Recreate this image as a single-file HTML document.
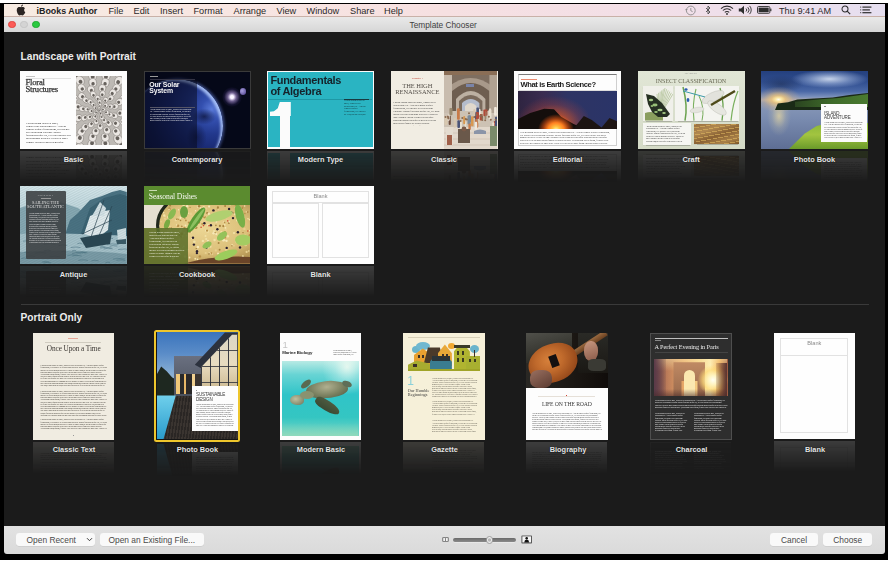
<!DOCTYPE html>
<html><head><meta charset="utf-8">
<style>
*{box-sizing:border-box;margin:0;padding:0}
html,body{width:888px;height:562px;overflow:hidden;background:#fff;font-family:"Liberation Sans",sans-serif}
.a{position:absolute}
#frame{position:absolute;left:0;top:3px;width:888px;height:556.7px;background:#000}
#menubar{position:absolute;left:3.5px;top:3.9px;width:881.2px;height:13.6px;background:linear-gradient(90deg,#f7ebe2 0%,#f7e6e2 25%,#f6e0e1 50%,#f2dfe8 75%,#e6dff0 100%);border-bottom:0.7px solid #c9b1a8}
#titlebar{position:absolute;left:3.5px;top:16.5px;width:881.2px;height:15.1px;background:linear-gradient(#e9e9e9,#d6d6d6)}
#content{position:absolute;left:3.5px;top:30px;width:881.2px;height:497px;background:#1b1b1b}
#bottombar{position:absolute;left:3.6px;top:525.9px;width:881px;height:27.8px;background:linear-gradient(#e2e2e2,#dadada);border-radius:0 0 3px 3px}
.mi{position:absolute;top:5.6px;font-size:9.2px;color:#2a2a2a;white-space:nowrap;line-height:11px}
.tl{position:absolute;top:20.5px;width:7.8px;height:7.8px;border-radius:50%}
.sec{position:absolute;color:#ececec;font-weight:bold;font-size:10.2px;white-space:nowrap;line-height:12px}
.th{position:absolute;width:107px;height:78px;overflow:hidden;-webkit-box-reflect:below 2px linear-gradient(transparent 60%,rgba(0,0,0,.15))}
.pt{position:absolute;width:82px;height:107px;overflow:hidden;-webkit-box-reflect:below 2px linear-gradient(transparent 70%,rgba(0,0,0,.15))}
.lb{position:absolute;width:123px;text-align:center;color:#e6e6e6;font-weight:bold;font-size:7.4px;line-height:9px;white-space:nowrap;text-shadow:0 0 1px #000}
.lo{position:absolute;overflow:hidden;font-family:'Liberation Serif',serif;text-align:left;word-spacing:-0.05em}
.btn{position:absolute;top:533.1px;height:12.8px;background:#f9f9f9;border-radius:3px;box-shadow:0 0.5px 0.5px rgba(0,0,0,.12);font-size:8.4px;color:#4a4a4a;line-height:14.2px;text-align:center;white-space:nowrap}
</style></head><body>
<div id="frame"></div>
<div id="content"></div>
<div id="bottombar"></div>
<div id="titlebar"></div>
<div id="menubar"></div>

<!-- menu bar -->
<div class="mi" style="left:36.5px;font-weight:bold;font-size:8.9px;color:#222">iBooks Author</div>
<div class="mi" style="left:108.5px">File</div>
<div class="mi" style="left:133.5px">Edit</div>
<div class="mi" style="left:160px">Insert</div>
<div class="mi" style="left:193.5px">Format</div>
<div class="mi" style="left:233.5px">Arrange</div>
<div class="mi" style="left:276.5px">View</div>
<div class="mi" style="left:306.5px">Window</div>
<div class="mi" style="left:350px">Share</div>
<div class="mi" style="left:384px">Help</div>
<div class="mi" style="left:779px">Thu 9:41 AM</div>
<svg class="a" style="left:15.5px;top:4.3px" width="10" height="12" viewBox="0 0 10 12"><path d="M5 3.3C3.9 2.7 1.8 2.6 1 4.6 0.2 6.8 1.3 9.9 2.6 11 3.4 11.7 4.2 11.3 5 11.1 5.8 11.3 6.6 11.7 7.4 11 8.3 10.3 8.9 9.1 9.3 8.3 8 7.6 7.6 5.3 8.9 4.3 8.2 2.9 6.4 2.7 5 3.3Z M5 2.7C5 1.5 5.8 0.5 7 0.4 7 1.6 6.2 2.6 5 2.7Z" fill="#2b2523"/></svg>
<svg class="a" style="left:684px;top:4.5px" width="13" height="11" viewBox="0 0 13 11"><circle cx="6.8" cy="5.5" r="4.4" fill="none" stroke="#8a8a8a" stroke-width="0.9"/><path d="M6.8 3v2.7l1.8 1" fill="none" stroke="#8a8a8a" stroke-width="0.9"/><path d="M1 4.2l1.4 1.6 1.4-1.6z" fill="#8a8a8a"/></svg>
<svg class="a" style="left:704.5px;top:4.5px" width="7" height="11" viewBox="0 0 7 11"><path d="M1 3l4 4-2 2V1l2 2-4 4" fill="none" stroke="#4a4a4a" stroke-width="0.9"/></svg>
<svg class="a" style="left:720px;top:4.6px" width="14" height="10" viewBox="0 0 14 10"><path d="M1 3.6a8.5 8.5 0 0 1 12 0M2.9 5.5a5.8 5.8 0 0 1 8.2 0M4.8 7.4a3.1 3.1 0 0 1 4.4 0" fill="none" stroke="#2e2e2e" stroke-width="1.05"/><circle cx="7" cy="9" r="0.9" fill="#2e2e2e"/></svg>
<svg class="a" style="left:738px;top:4.8px" width="15" height="10" viewBox="0 0 15 10"><path d="M0.8 3.4h2.2l3-2.6v8.4l-3-2.6H0.8z" fill="#2e2e2e"/><path d="M8 3.5a2 2 0 0 1 0 3M9.8 2.2a4 4 0 0 1 0 5.6M11.6 0.9a6 6 0 0 1 0 8.2" fill="none" stroke="#2e2e2e" stroke-width="0.9"/></svg>
<svg class="a" style="left:757px;top:6px" width="15" height="8" viewBox="0 0 15 8"><rect x="0.5" y="0.5" width="12.3" height="6.8" rx="1" fill="none" stroke="#2e2e2e" stroke-width="0.9"/><rect x="1.6" y="1.6" width="10.1" height="4.6" fill="#2e2e2e"/><rect x="13.2" y="2.6" width="1.2" height="2.6" fill="#2e2e2e"/></svg>
<svg class="a" style="left:840.5px;top:5px" width="10" height="10" viewBox="0 0 10 10"><circle cx="4" cy="4" r="3" fill="none" stroke="#2e2e2e" stroke-width="1.05"/><path d="M6.2 6.2L9.2 9.2" stroke="#2e2e2e" stroke-width="1.2"/></svg>
<svg class="a" style="left:859.5px;top:6px" width="12" height="8" viewBox="0 0 12 8"><rect x="0.2" y="0.6" width="1" height="1" fill="#2e2e2e"/><rect x="0.2" y="3.4" width="1" height="1" fill="#2e2e2e"/><rect x="0.2" y="6.2" width="1" height="1" fill="#2e2e2e"/><rect x="2.4" y="0.5" width="9" height="1.2" fill="#2e2e2e"/><rect x="2.4" y="3.3" width="7.5" height="1.2" fill="#2e2e2e"/><rect x="2.4" y="6.1" width="9" height="1.2" fill="#2e2e2e"/></svg>


<!-- title bar -->
<div class="tl" style="left:8.2px;background:#fc5b57;border:0.5px solid #e0443e"></div>
<div class="tl" style="left:20.3px;background:#d4d4d4;border:0.5px solid #c5c5c5"></div>
<div class="tl" style="left:32.4px;background:#2ac940;border:0.5px solid #1fa82f"></div>
<div class="a" style="left:409.5px;top:19.5px;font-size:8.3px;color:#404040;line-height:10px;white-space:nowrap">Template Chooser</div>

<!-- sections -->
<div class="sec" style="left:20.5px;top:51px">Landscape with Portrait</div>
<div class="a" style="left:20.5px;top:303.8px;width:848px;height:1px;background:#3a3a3a"></div>
<div class="sec" style="left:20.5px;top:311.5px">Portrait Only</div>

<!-- row 1 -->
<div class="th" style="left:20px;top:71px;background:#fdfdfd">
 <div class="a" style="left:6px;top:4.6px;width:9px;height:0.8px;background:#c4c4c4"></div>
 <div class="a" style="left:6px;top:7.2px;width:45px;height:0.5px;background:#e2e2e2"></div>
 <div class="a" style="left:5.6px;top:8.2px;font:8.6px/7.2px 'Liberation Serif',serif;color:#333;letter-spacing:-0.25px;-webkit-text-stroke:0.25px #333">Floral<br>Structures</div>
 <div class="a lo" style="left:6px;top:50.71px;width:45px;height:22.5px;font-size:2.9px;line-height:3.15px;color:#1a1a1a">Lorem ipsum dolor sit amet, consectetur adipiscing elit. Aenean tempor aliquet fermentum, elit integer ad vestibulum volutpat. Morbi faucibus neque est, vel odio integer sed nulla magna ultricies. Dolor sit amet congue lorem etiam pellentesque habitant morbi tristique senectus et netus malesuada fames ac turpis egestas. Vestibulum tortor quam, feugiat vitae ultricies eget tempor sit amet ante. Donec eu libero sit amet quam egestas semper aenean ultricies mi vitae est. Mauris placerat eleifend leo quisque sit amet est et sapien ullamcorper pharetra vestibulum erat wisi condimentum sed commodo vitae ornare sit amet wisi aenean fermentum elit eget tincidunt condimentum eros ipsum rutrum orci sagittis tempus lacus enim ac dui donec non enim in turpis pulvinar facilisis ut felis praesent dapibus neque id cursus faucibus tortor neque egestas augue eu vulputate magna eros eu erat aliquam erat volutpat nam dui mi tincidunt quis accumsan porttitor facilisis luctus metus.</div>
  <svg class="a" style="left:56px;top:4.6px" width="46" height="69.5" viewBox="0 0 46 69.5"><rect width="46" height="69.5" fill="#bdb9b4"/><g transform="translate(75.0,34.0) rotate(90)"><ellipse rx="4.9" ry="6.2" fill="#ebe7e3" stroke="#7e7974" stroke-width="0.5"/><ellipse cy="1.6" rx="2.2" ry="2.5" fill="#66615c"/></g><g transform="translate(72.5,50.1) rotate(108)"><ellipse rx="4.9" ry="6.2" fill="#ebe7e3" stroke="#7e7974" stroke-width="0.5"/><ellipse cy="1.6" rx="2.2" ry="2.5" fill="#66615c"/></g><g transform="translate(65.1,64.6) rotate(126)"><ellipse rx="4.9" ry="6.2" fill="#ebe7e3" stroke="#7e7974" stroke-width="0.5"/><ellipse cy="1.6" rx="2.2" ry="2.5" fill="#66615c"/></g><g transform="translate(53.6,76.1) rotate(144)"><ellipse rx="4.9" ry="6.2" fill="#ebe7e3" stroke="#7e7974" stroke-width="0.5"/><ellipse cy="1.6" rx="2.2" ry="2.5" fill="#66615c"/></g><g transform="translate(39.1,83.5) rotate(162)"><ellipse rx="4.9" ry="6.2" fill="#ebe7e3" stroke="#7e7974" stroke-width="0.5"/><ellipse cy="1.6" rx="2.2" ry="2.5" fill="#66615c"/></g><g transform="translate(23.0,86.0) rotate(180)"><ellipse rx="4.9" ry="6.2" fill="#ebe7e3" stroke="#7e7974" stroke-width="0.5"/><ellipse cy="1.6" rx="2.2" ry="2.5" fill="#66615c"/></g><g transform="translate(6.9,83.5) rotate(198)"><ellipse rx="4.9" ry="6.2" fill="#ebe7e3" stroke="#7e7974" stroke-width="0.5"/><ellipse cy="1.6" rx="2.2" ry="2.5" fill="#66615c"/></g><g transform="translate(-7.6,76.1) rotate(216)"><ellipse rx="4.9" ry="6.2" fill="#ebe7e3" stroke="#7e7974" stroke-width="0.5"/><ellipse cy="1.6" rx="2.2" ry="2.5" fill="#66615c"/></g><g transform="translate(-19.1,64.6) rotate(234)"><ellipse rx="4.9" ry="6.2" fill="#ebe7e3" stroke="#7e7974" stroke-width="0.5"/><ellipse cy="1.6" rx="2.2" ry="2.5" fill="#66615c"/></g><g transform="translate(-26.5,50.1) rotate(252)"><ellipse rx="4.9" ry="6.2" fill="#ebe7e3" stroke="#7e7974" stroke-width="0.5"/><ellipse cy="1.6" rx="2.2" ry="2.5" fill="#66615c"/></g><g transform="translate(-29.0,34.0) rotate(270)"><ellipse rx="4.9" ry="6.2" fill="#ebe7e3" stroke="#7e7974" stroke-width="0.5"/><ellipse cy="1.6" rx="2.2" ry="2.5" fill="#66615c"/></g><g transform="translate(-26.5,17.9) rotate(288)"><ellipse rx="4.9" ry="6.2" fill="#ebe7e3" stroke="#7e7974" stroke-width="0.5"/><ellipse cy="1.6" rx="2.2" ry="2.5" fill="#66615c"/></g><g transform="translate(-19.1,3.4) rotate(306)"><ellipse rx="4.9" ry="6.2" fill="#ebe7e3" stroke="#7e7974" stroke-width="0.5"/><ellipse cy="1.6" rx="2.2" ry="2.5" fill="#66615c"/></g><g transform="translate(-7.6,-8.1) rotate(324)"><ellipse rx="4.9" ry="6.2" fill="#ebe7e3" stroke="#7e7974" stroke-width="0.5"/><ellipse cy="1.6" rx="2.2" ry="2.5" fill="#66615c"/></g><g transform="translate(6.9,-15.5) rotate(342)"><ellipse rx="4.9" ry="6.2" fill="#ebe7e3" stroke="#7e7974" stroke-width="0.5"/><ellipse cy="1.6" rx="2.2" ry="2.5" fill="#66615c"/></g><g transform="translate(23.0,-18.0) rotate(360)"><ellipse rx="4.9" ry="6.2" fill="#ebe7e3" stroke="#7e7974" stroke-width="0.5"/><ellipse cy="1.6" rx="2.2" ry="2.5" fill="#66615c"/></g><g transform="translate(39.1,-15.5) rotate(378)"><ellipse rx="4.9" ry="6.2" fill="#ebe7e3" stroke="#7e7974" stroke-width="0.5"/><ellipse cy="1.6" rx="2.2" ry="2.5" fill="#66615c"/></g><g transform="translate(53.6,-8.1) rotate(396)"><ellipse rx="4.9" ry="6.2" fill="#ebe7e3" stroke="#7e7974" stroke-width="0.5"/><ellipse cy="1.6" rx="2.2" ry="2.5" fill="#66615c"/></g><g transform="translate(65.1,3.4) rotate(414)"><ellipse rx="4.9" ry="6.2" fill="#ebe7e3" stroke="#7e7974" stroke-width="0.5"/><ellipse cy="1.6" rx="2.2" ry="2.5" fill="#66615c"/></g><g transform="translate(72.5,17.9) rotate(432)"><ellipse rx="4.9" ry="6.2" fill="#ebe7e3" stroke="#7e7974" stroke-width="0.5"/><ellipse cy="1.6" rx="2.2" ry="2.5" fill="#66615c"/></g><g transform="translate(64.1,46.7) rotate(107)"><ellipse rx="4.5" ry="5.6" fill="#ebe7e3" stroke="#7e7974" stroke-width="0.5"/><ellipse cy="1.4" rx="2.0" ry="2.2" fill="#66615c"/></g><g transform="translate(57.3,60.0) rotate(127)"><ellipse rx="4.5" ry="5.6" fill="#ebe7e3" stroke="#7e7974" stroke-width="0.5"/><ellipse cy="1.4" rx="2.0" ry="2.2" fill="#66615c"/></g><g transform="translate(46.3,70.1) rotate(147)"><ellipse rx="4.5" ry="5.6" fill="#ebe7e3" stroke="#7e7974" stroke-width="0.5"/><ellipse cy="1.4" rx="2.0" ry="2.2" fill="#66615c"/></g><g transform="translate(32.5,75.9) rotate(167)"><ellipse rx="4.5" ry="5.6" fill="#ebe7e3" stroke="#7e7974" stroke-width="0.5"/><ellipse cy="1.4" rx="2.0" ry="2.2" fill="#66615c"/></g><g transform="translate(17.6,76.7) rotate(187)"><ellipse rx="4.5" ry="5.6" fill="#ebe7e3" stroke="#7e7974" stroke-width="0.5"/><ellipse cy="1.4" rx="2.0" ry="2.2" fill="#66615c"/></g><g transform="translate(3.4,72.2) rotate(207)"><ellipse rx="4.5" ry="5.6" fill="#ebe7e3" stroke="#7e7974" stroke-width="0.5"/><ellipse cy="1.4" rx="2.0" ry="2.2" fill="#66615c"/></g><g transform="translate(-8.5,63.2) rotate(227)"><ellipse rx="4.5" ry="5.6" fill="#ebe7e3" stroke="#7e7974" stroke-width="0.5"/><ellipse cy="1.4" rx="2.0" ry="2.2" fill="#66615c"/></g><g transform="translate(-16.6,50.7) rotate(247)"><ellipse rx="4.5" ry="5.6" fill="#ebe7e3" stroke="#7e7974" stroke-width="0.5"/><ellipse cy="1.4" rx="2.0" ry="2.2" fill="#66615c"/></g><g transform="translate(-19.9,36.1) rotate(267)"><ellipse rx="4.5" ry="5.6" fill="#ebe7e3" stroke="#7e7974" stroke-width="0.5"/><ellipse cy="1.4" rx="2.0" ry="2.2" fill="#66615c"/></g><g transform="translate(-18.1,21.3) rotate(287)"><ellipse rx="4.5" ry="5.6" fill="#ebe7e3" stroke="#7e7974" stroke-width="0.5"/><ellipse cy="1.4" rx="2.0" ry="2.2" fill="#66615c"/></g><g transform="translate(-11.3,8.0) rotate(307)"><ellipse rx="4.5" ry="5.6" fill="#ebe7e3" stroke="#7e7974" stroke-width="0.5"/><ellipse cy="1.4" rx="2.0" ry="2.2" fill="#66615c"/></g><g transform="translate(-0.3,-2.1) rotate(327)"><ellipse rx="4.5" ry="5.6" fill="#ebe7e3" stroke="#7e7974" stroke-width="0.5"/><ellipse cy="1.4" rx="2.0" ry="2.2" fill="#66615c"/></g><g transform="translate(13.5,-7.9) rotate(347)"><ellipse rx="4.5" ry="5.6" fill="#ebe7e3" stroke="#7e7974" stroke-width="0.5"/><ellipse cy="1.4" rx="2.0" ry="2.2" fill="#66615c"/></g><g transform="translate(28.4,-8.7) rotate(367)"><ellipse rx="4.5" ry="5.6" fill="#ebe7e3" stroke="#7e7974" stroke-width="0.5"/><ellipse cy="1.4" rx="2.0" ry="2.2" fill="#66615c"/></g><g transform="translate(42.6,-4.2) rotate(387)"><ellipse rx="4.5" ry="5.6" fill="#ebe7e3" stroke="#7e7974" stroke-width="0.5"/><ellipse cy="1.4" rx="2.0" ry="2.2" fill="#66615c"/></g><g transform="translate(54.5,4.8) rotate(407)"><ellipse rx="4.5" ry="5.6" fill="#ebe7e3" stroke="#7e7974" stroke-width="0.5"/><ellipse cy="1.4" rx="2.0" ry="2.2" fill="#66615c"/></g><g transform="translate(62.6,17.3) rotate(427)"><ellipse rx="4.5" ry="5.6" fill="#ebe7e3" stroke="#7e7974" stroke-width="0.5"/><ellipse cy="1.4" rx="2.0" ry="2.2" fill="#66615c"/></g><g transform="translate(65.9,31.9) rotate(447)"><ellipse rx="4.5" ry="5.6" fill="#ebe7e3" stroke="#7e7974" stroke-width="0.5"/><ellipse cy="1.4" rx="2.0" ry="2.2" fill="#66615c"/></g><g transform="translate(51.9,53.8) rotate(124)"><ellipse rx="4.1" ry="5.0" fill="#ebe7e3" stroke="#7e7974" stroke-width="0.5"/><ellipse cy="1.2" rx="1.9" ry="2.0" fill="#66615c"/></g><g transform="translate(42.1,63.3) rotate(147)"><ellipse rx="4.1" ry="5.0" fill="#ebe7e3" stroke="#7e7974" stroke-width="0.5"/><ellipse cy="1.2" rx="1.9" ry="2.0" fill="#66615c"/></g><g transform="translate(29.5,68.4) rotate(169)"><ellipse rx="4.1" ry="5.0" fill="#ebe7e3" stroke="#7e7974" stroke-width="0.5"/><ellipse cy="1.2" rx="1.9" ry="2.0" fill="#66615c"/></g><g transform="translate(15.8,68.3) rotate(192)"><ellipse rx="4.1" ry="5.0" fill="#ebe7e3" stroke="#7e7974" stroke-width="0.5"/><ellipse cy="1.2" rx="1.9" ry="2.0" fill="#66615c"/></g><g transform="translate(3.2,62.9) rotate(214)"><ellipse rx="4.1" ry="5.0" fill="#ebe7e3" stroke="#7e7974" stroke-width="0.5"/><ellipse cy="1.2" rx="1.9" ry="2.0" fill="#66615c"/></g><g transform="translate(-6.3,53.1) rotate(237)"><ellipse rx="4.1" ry="5.0" fill="#ebe7e3" stroke="#7e7974" stroke-width="0.5"/><ellipse cy="1.2" rx="1.9" ry="2.0" fill="#66615c"/></g><g transform="translate(-11.4,40.5) rotate(259)"><ellipse rx="4.1" ry="5.0" fill="#ebe7e3" stroke="#7e7974" stroke-width="0.5"/><ellipse cy="1.2" rx="1.9" ry="2.0" fill="#66615c"/></g><g transform="translate(-11.3,26.8) rotate(282)"><ellipse rx="4.1" ry="5.0" fill="#ebe7e3" stroke="#7e7974" stroke-width="0.5"/><ellipse cy="1.2" rx="1.9" ry="2.0" fill="#66615c"/></g><g transform="translate(-5.9,14.2) rotate(304)"><ellipse rx="4.1" ry="5.0" fill="#ebe7e3" stroke="#7e7974" stroke-width="0.5"/><ellipse cy="1.2" rx="1.9" ry="2.0" fill="#66615c"/></g><g transform="translate(3.9,4.7) rotate(327)"><ellipse rx="4.1" ry="5.0" fill="#ebe7e3" stroke="#7e7974" stroke-width="0.5"/><ellipse cy="1.2" rx="1.9" ry="2.0" fill="#66615c"/></g><g transform="translate(16.5,-0.4) rotate(349)"><ellipse rx="4.1" ry="5.0" fill="#ebe7e3" stroke="#7e7974" stroke-width="0.5"/><ellipse cy="1.2" rx="1.9" ry="2.0" fill="#66615c"/></g><g transform="translate(30.2,-0.3) rotate(372)"><ellipse rx="4.1" ry="5.0" fill="#ebe7e3" stroke="#7e7974" stroke-width="0.5"/><ellipse cy="1.2" rx="1.9" ry="2.0" fill="#66615c"/></g><g transform="translate(42.8,5.1) rotate(394)"><ellipse rx="4.1" ry="5.0" fill="#ebe7e3" stroke="#7e7974" stroke-width="0.5"/><ellipse cy="1.2" rx="1.9" ry="2.0" fill="#66615c"/></g><g transform="translate(52.3,14.9) rotate(417)"><ellipse rx="4.1" ry="5.0" fill="#ebe7e3" stroke="#7e7974" stroke-width="0.5"/><ellipse cy="1.2" rx="1.9" ry="2.0" fill="#66615c"/></g><g transform="translate(57.4,27.5) rotate(439)"><ellipse rx="4.1" ry="5.0" fill="#ebe7e3" stroke="#7e7974" stroke-width="0.5"/><ellipse cy="1.2" rx="1.9" ry="2.0" fill="#66615c"/></g><g transform="translate(57.3,41.2) rotate(462)"><ellipse rx="4.1" ry="5.0" fill="#ebe7e3" stroke="#7e7974" stroke-width="0.5"/><ellipse cy="1.2" rx="1.9" ry="2.0" fill="#66615c"/></g><g transform="translate(40.4,55.9) rotate(142)"><ellipse rx="3.8" ry="4.3" fill="#ebe7e3" stroke="#7e7974" stroke-width="0.5"/><ellipse cy="1.1" rx="1.7" ry="1.7" fill="#66615c"/></g><g transform="translate(29.2,61.3) rotate(167)"><ellipse rx="3.8" ry="4.3" fill="#ebe7e3" stroke="#7e7974" stroke-width="0.5"/><ellipse cy="1.1" rx="1.7" ry="1.7" fill="#66615c"/></g><g transform="translate(16.7,61.3) rotate(193)"><ellipse rx="3.8" ry="4.3" fill="#ebe7e3" stroke="#7e7974" stroke-width="0.5"/><ellipse cy="1.1" rx="1.7" ry="1.7" fill="#66615c"/></g><g transform="translate(5.5,55.8) rotate(219)"><ellipse rx="3.8" ry="4.3" fill="#ebe7e3" stroke="#7e7974" stroke-width="0.5"/><ellipse cy="1.1" rx="1.7" ry="1.7" fill="#66615c"/></g><g transform="translate(-2.3,46.1) rotate(244)"><ellipse rx="3.8" ry="4.3" fill="#ebe7e3" stroke="#7e7974" stroke-width="0.5"/><ellipse cy="1.1" rx="1.7" ry="1.7" fill="#66615c"/></g><g transform="translate(-5.0,33.9) rotate(270)"><ellipse rx="3.8" ry="4.3" fill="#ebe7e3" stroke="#7e7974" stroke-width="0.5"/><ellipse cy="1.1" rx="1.7" ry="1.7" fill="#66615c"/></g><g transform="translate(-2.2,21.8) rotate(296)"><ellipse rx="3.8" ry="4.3" fill="#ebe7e3" stroke="#7e7974" stroke-width="0.5"/><ellipse cy="1.1" rx="1.7" ry="1.7" fill="#66615c"/></g><g transform="translate(5.6,12.1) rotate(322)"><ellipse rx="3.8" ry="4.3" fill="#ebe7e3" stroke="#7e7974" stroke-width="0.5"/><ellipse cy="1.1" rx="1.7" ry="1.7" fill="#66615c"/></g><g transform="translate(16.8,6.7) rotate(347)"><ellipse rx="3.8" ry="4.3" fill="#ebe7e3" stroke="#7e7974" stroke-width="0.5"/><ellipse cy="1.1" rx="1.7" ry="1.7" fill="#66615c"/></g><g transform="translate(29.3,6.7) rotate(373)"><ellipse rx="3.8" ry="4.3" fill="#ebe7e3" stroke="#7e7974" stroke-width="0.5"/><ellipse cy="1.1" rx="1.7" ry="1.7" fill="#66615c"/></g><g transform="translate(40.5,12.2) rotate(399)"><ellipse rx="3.8" ry="4.3" fill="#ebe7e3" stroke="#7e7974" stroke-width="0.5"/><ellipse cy="1.1" rx="1.7" ry="1.7" fill="#66615c"/></g><g transform="translate(48.3,21.9) rotate(424)"><ellipse rx="3.8" ry="4.3" fill="#ebe7e3" stroke="#7e7974" stroke-width="0.5"/><ellipse cy="1.1" rx="1.7" ry="1.7" fill="#66615c"/></g><g transform="translate(51.0,34.1) rotate(450)"><ellipse rx="3.8" ry="4.3" fill="#ebe7e3" stroke="#7e7974" stroke-width="0.5"/><ellipse cy="1.1" rx="1.7" ry="1.7" fill="#66615c"/></g><g transform="translate(48.2,46.2) rotate(476)"><ellipse rx="3.8" ry="4.3" fill="#ebe7e3" stroke="#7e7974" stroke-width="0.5"/><ellipse cy="1.1" rx="1.7" ry="1.7" fill="#66615c"/></g><g transform="translate(31.0,54.5) rotate(159)"><ellipse rx="3.5" ry="3.7" fill="#ebe7e3" stroke="#7e7974" stroke-width="0.5"/><ellipse cy="0.9" rx="1.6" ry="1.5" fill="#66615c"/></g><g transform="translate(19.7,55.7) rotate(189)"><ellipse rx="3.5" ry="3.7" fill="#ebe7e3" stroke="#7e7974" stroke-width="0.5"/><ellipse cy="0.9" rx="1.6" ry="1.5" fill="#66615c"/></g><g transform="translate(9.2,51.2) rotate(219)"><ellipse rx="3.5" ry="3.7" fill="#ebe7e3" stroke="#7e7974" stroke-width="0.5"/><ellipse cy="0.9" rx="1.6" ry="1.5" fill="#66615c"/></g><g transform="translate(2.5,42.0) rotate(249)"><ellipse rx="3.5" ry="3.7" fill="#ebe7e3" stroke="#7e7974" stroke-width="0.5"/><ellipse cy="0.9" rx="1.6" ry="1.5" fill="#66615c"/></g><g transform="translate(1.3,30.7) rotate(279)"><ellipse rx="3.5" ry="3.7" fill="#ebe7e3" stroke="#7e7974" stroke-width="0.5"/><ellipse cy="0.9" rx="1.6" ry="1.5" fill="#66615c"/></g><g transform="translate(5.8,20.2) rotate(309)"><ellipse rx="3.5" ry="3.7" fill="#ebe7e3" stroke="#7e7974" stroke-width="0.5"/><ellipse cy="0.9" rx="1.6" ry="1.5" fill="#66615c"/></g><g transform="translate(15.0,13.5) rotate(339)"><ellipse rx="3.5" ry="3.7" fill="#ebe7e3" stroke="#7e7974" stroke-width="0.5"/><ellipse cy="0.9" rx="1.6" ry="1.5" fill="#66615c"/></g><g transform="translate(26.3,12.3) rotate(369)"><ellipse rx="3.5" ry="3.7" fill="#ebe7e3" stroke="#7e7974" stroke-width="0.5"/><ellipse cy="0.9" rx="1.6" ry="1.5" fill="#66615c"/></g><g transform="translate(36.8,16.8) rotate(399)"><ellipse rx="3.5" ry="3.7" fill="#ebe7e3" stroke="#7e7974" stroke-width="0.5"/><ellipse cy="0.9" rx="1.6" ry="1.5" fill="#66615c"/></g><g transform="translate(43.5,26.0) rotate(429)"><ellipse rx="3.5" ry="3.7" fill="#ebe7e3" stroke="#7e7974" stroke-width="0.5"/><ellipse cy="0.9" rx="1.6" ry="1.5" fill="#66615c"/></g><g transform="translate(44.7,37.3) rotate(459)"><ellipse rx="3.5" ry="3.7" fill="#ebe7e3" stroke="#7e7974" stroke-width="0.5"/><ellipse cy="0.9" rx="1.6" ry="1.5" fill="#66615c"/></g><g transform="translate(40.2,47.8) rotate(489)"><ellipse rx="3.5" ry="3.7" fill="#ebe7e3" stroke="#7e7974" stroke-width="0.5"/><ellipse cy="0.9" rx="1.6" ry="1.5" fill="#66615c"/></g><g transform="translate(24.2,50.5) rotate(176)"><ellipse rx="2.8" ry="3.4" fill="#ebe7e3" stroke="#7e7974" stroke-width="0.5"/><ellipse cy="0.9" rx="1.3" ry="1.4" fill="#66615c"/></g><g transform="translate(15.1,48.5) rotate(209)"><ellipse rx="2.8" ry="3.4" fill="#ebe7e3" stroke="#7e7974" stroke-width="0.5"/><ellipse cy="0.9" rx="1.3" ry="1.4" fill="#66615c"/></g><g transform="translate(8.5,41.9) rotate(241)"><ellipse rx="2.8" ry="3.4" fill="#ebe7e3" stroke="#7e7974" stroke-width="0.5"/><ellipse cy="0.9" rx="1.3" ry="1.4" fill="#66615c"/></g><g transform="translate(6.5,32.8) rotate(274)"><ellipse rx="2.8" ry="3.4" fill="#ebe7e3" stroke="#7e7974" stroke-width="0.5"/><ellipse cy="0.9" rx="1.3" ry="1.4" fill="#66615c"/></g><g transform="translate(9.8,24.1) rotate(307)"><ellipse rx="2.8" ry="3.4" fill="#ebe7e3" stroke="#7e7974" stroke-width="0.5"/><ellipse cy="0.9" rx="1.3" ry="1.4" fill="#66615c"/></g><g transform="translate(17.2,18.5) rotate(340)"><ellipse rx="2.8" ry="3.4" fill="#ebe7e3" stroke="#7e7974" stroke-width="0.5"/><ellipse cy="0.9" rx="1.3" ry="1.4" fill="#66615c"/></g><g transform="translate(26.5,17.9) rotate(372)"><ellipse rx="2.8" ry="3.4" fill="#ebe7e3" stroke="#7e7974" stroke-width="0.5"/><ellipse cy="0.9" rx="1.3" ry="1.4" fill="#66615c"/></g><g transform="translate(34.7,22.3) rotate(405)"><ellipse rx="2.8" ry="3.4" fill="#ebe7e3" stroke="#7e7974" stroke-width="0.5"/><ellipse cy="0.9" rx="1.3" ry="1.4" fill="#66615c"/></g><g transform="translate(39.1,30.5) rotate(438)"><ellipse rx="2.8" ry="3.4" fill="#ebe7e3" stroke="#7e7974" stroke-width="0.5"/><ellipse cy="0.9" rx="1.3" ry="1.4" fill="#66615c"/></g><g transform="translate(38.5,39.8) rotate(470)"><ellipse rx="2.8" ry="3.4" fill="#ebe7e3" stroke="#7e7974" stroke-width="0.5"/><ellipse cy="0.9" rx="1.3" ry="1.4" fill="#66615c"/></g><g transform="translate(32.9,47.2) rotate(503)"><ellipse rx="2.8" ry="3.4" fill="#ebe7e3" stroke="#7e7974" stroke-width="0.5"/><ellipse cy="0.9" rx="1.3" ry="1.4" fill="#66615c"/></g><g transform="translate(20.3,45.7) rotate(193)"><ellipse rx="2.5" ry="2.8" fill="#ebe7e3" stroke="#7e7974" stroke-width="0.5"/><ellipse cy="0.7" rx="1.1" ry="1.1" fill="#66615c"/></g><g transform="translate(13.4,41.2) rotate(233)"><ellipse rx="2.5" ry="2.8" fill="#ebe7e3" stroke="#7e7974" stroke-width="0.5"/><ellipse cy="0.7" rx="1.1" ry="1.1" fill="#66615c"/></g><g transform="translate(11.0,33.3) rotate(273)"><ellipse rx="2.5" ry="2.8" fill="#ebe7e3" stroke="#7e7974" stroke-width="0.5"/><ellipse cy="0.7" rx="1.1" ry="1.1" fill="#66615c"/></g><g transform="translate(14.2,25.8) rotate(313)"><ellipse rx="2.5" ry="2.8" fill="#ebe7e3" stroke="#7e7974" stroke-width="0.5"/><ellipse cy="0.7" rx="1.1" ry="1.1" fill="#66615c"/></g><g transform="translate(21.6,22.1) rotate(353)"><ellipse rx="2.5" ry="2.8" fill="#ebe7e3" stroke="#7e7974" stroke-width="0.5"/><ellipse cy="0.7" rx="1.1" ry="1.1" fill="#66615c"/></g><g transform="translate(29.6,24.0) rotate(393)"><ellipse rx="2.5" ry="2.8" fill="#ebe7e3" stroke="#7e7974" stroke-width="0.5"/><ellipse cy="0.7" rx="1.1" ry="1.1" fill="#66615c"/></g><g transform="translate(34.5,30.5) rotate(433)"><ellipse rx="2.5" ry="2.8" fill="#ebe7e3" stroke="#7e7974" stroke-width="0.5"/><ellipse cy="0.7" rx="1.1" ry="1.1" fill="#66615c"/></g><g transform="translate(34.0,38.7) rotate(473)"><ellipse rx="2.5" ry="2.8" fill="#ebe7e3" stroke="#7e7974" stroke-width="0.5"/><ellipse cy="0.7" rx="1.1" ry="1.1" fill="#66615c"/></g><g transform="translate(28.4,44.7) rotate(513)"><ellipse rx="2.5" ry="2.8" fill="#ebe7e3" stroke="#7e7974" stroke-width="0.5"/><ellipse cy="0.7" rx="1.1" ry="1.1" fill="#66615c"/></g><g transform="translate(19.0,40.9) rotate(210)"><ellipse rx="2.2" ry="2.5" fill="#ebe7e3" stroke="#7e7974" stroke-width="0.5"/><ellipse cy="0.6" rx="1.0" ry="1.0" fill="#66615c"/></g><g transform="translate(15.1,35.1) rotate(262)"><ellipse rx="2.2" ry="2.5" fill="#ebe7e3" stroke="#7e7974" stroke-width="0.5"/><ellipse cy="0.6" rx="1.0" ry="1.0" fill="#66615c"/></g><g transform="translate(17.2,28.5) rotate(313)"><ellipse rx="2.2" ry="2.5" fill="#ebe7e3" stroke="#7e7974" stroke-width="0.5"/><ellipse cy="0.6" rx="1.0" ry="1.0" fill="#66615c"/></g><g transform="translate(23.6,26.0) rotate(365)"><ellipse rx="2.2" ry="2.5" fill="#ebe7e3" stroke="#7e7974" stroke-width="0.5"/><ellipse cy="0.6" rx="1.0" ry="1.0" fill="#66615c"/></g><g transform="translate(29.6,29.5) rotate(416)"><ellipse rx="2.2" ry="2.5" fill="#ebe7e3" stroke="#7e7974" stroke-width="0.5"/><ellipse cy="0.6" rx="1.0" ry="1.0" fill="#66615c"/></g><g transform="translate(30.6,36.4) rotate(467)"><ellipse rx="2.2" ry="2.5" fill="#ebe7e3" stroke="#7e7974" stroke-width="0.5"/><ellipse cy="0.6" rx="1.0" ry="1.0" fill="#66615c"/></g><g transform="translate(25.9,41.5) rotate(519)"><ellipse rx="2.2" ry="2.5" fill="#ebe7e3" stroke="#7e7974" stroke-width="0.5"/><ellipse cy="0.6" rx="1.0" ry="1.0" fill="#66615c"/></g><g transform="translate(19.7,37.0) rotate(228)"><ellipse rx="1.7" ry="2.2" fill="#ebe7e3" stroke="#7e7974" stroke-width="0.5"/><ellipse cy="0.5" rx="0.8" ry="0.9" fill="#66615c"/></g><g transform="translate(19.1,31.8) rotate(300)"><ellipse rx="1.7" ry="2.2" fill="#ebe7e3" stroke="#7e7974" stroke-width="0.5"/><ellipse cy="0.5" rx="0.8" ry="0.9" fill="#66615c"/></g><g transform="translate(23.9,29.6) rotate(372)"><ellipse rx="1.7" ry="2.2" fill="#ebe7e3" stroke="#7e7974" stroke-width="0.5"/><ellipse cy="0.5" rx="0.8" ry="0.9" fill="#66615c"/></g><g transform="translate(27.5,33.5) rotate(444)"><ellipse rx="1.7" ry="2.2" fill="#ebe7e3" stroke="#7e7974" stroke-width="0.5"/><ellipse cy="0.5" rx="0.8" ry="0.9" fill="#66615c"/></g><g transform="translate(24.9,38.1) rotate(516)"><ellipse rx="1.7" ry="2.2" fill="#ebe7e3" stroke="#7e7974" stroke-width="0.5"/><ellipse cy="0.5" rx="0.8" ry="0.9" fill="#66615c"/></g><g transform="translate(21.6,34.6) rotate(245)"><ellipse rx="1.3" ry="1.9" fill="#ebe7e3" stroke="#7e7974" stroke-width="0.5"/><ellipse cy="0.5" rx="0.6" ry="0.7" fill="#66615c"/></g><g transform="translate(23.1,32.5) rotate(365)"><ellipse rx="1.3" ry="1.9" fill="#ebe7e3" stroke="#7e7974" stroke-width="0.5"/><ellipse cy="0.5" rx="0.6" ry="0.7" fill="#66615c"/></g><g transform="translate(24.2,34.9) rotate(485)"><ellipse rx="1.3" ry="1.9" fill="#ebe7e3" stroke="#7e7974" stroke-width="0.5"/><ellipse cy="0.5" rx="0.6" ry="0.7" fill="#66615c"/></g></svg>
</div>
<div class="th" style="left:143.5px;top:71px;background:#050818;border:1px solid #3a3a3a">
 <div class="a" style="left:-16px;top:7px;width:94px;height:94px;border-radius:50%;background:radial-gradient(ellipse 12px 8px at 80% 40%,rgba(10,16,50,.7),rgba(10,16,50,0)),radial-gradient(ellipse 10px 14px at 72% 62%,rgba(10,16,50,.6),rgba(10,16,50,0)),radial-gradient(circle at 88% 32%,#5a7ad8 0,#3450b0 10%,#22388c 24%,#182870 40%,#111c50 60%,#0a1234 88%);box-shadow:inset -2.5px 2px 2.5px rgba(180,205,255,.85),1.5px -0.5px 3px rgba(120,150,255,.45)"></div>
 <div class="a" style="left:-1px;top:-1px;width:53px;height:78px;background:rgba(5,8,24,.5)"></div>
 <div class="a" style="left:77px;top:15px;width:20px;height:20px;border-radius:50%;background:radial-gradient(#fff 0,#f4eeff 12%,rgba(200,170,245,.55) 30%,rgba(110,80,190,.15) 55%,rgba(80,60,160,0) 72%)"></div>
 <div class="a" style="left:95px;top:16px;width:6.5px;height:6.5px;border-radius:50%;background:radial-gradient(circle at 35% 40%,#a8a0e0,#4a3a88)"></div>
 <div class="a" style="left:5px;top:4.3px;width:8px;height:0.8px;background:#999"></div>
 <div class="a" style="left:5px;top:6.5px;width:45px;height:0.5px;background:#334"></div>
 <div class="a" style="left:4.8px;top:9.5px;font:bold 6.9px/6.5px 'Liberation Sans',sans-serif;color:#f4f4f4;letter-spacing:-0.15px">Our Solar<br>System</div>
 <div class="a" style="left:5px;top:34.5px;width:45px;height:0.6px;background:#556"></div>
 <div class="a lo" style="left:5px;top:35.92px;width:43px;height:13.5px;font-size:2.07px;line-height:2.3px;color:#f0f0f0">Lorem ipsum dolor sit amet, consectetur adipiscing elit. Aenean tempor aliquet fermentum, elit integer ad vestibulum volutpat. Morbi faucibus neque est, vel odio integer sed nulla magna ultricies. Dolor sit amet congue lorem etiam pellentesque habitant morbi tristique senectus et netus malesuada fames ac turpis egestas. Vestibulum tortor quam, feugiat vitae ultricies eget tempor sit amet ante. Donec eu libero sit amet quam egestas semper aenean ultricies mi vitae est. Mauris placerat eleifend leo quisque sit amet est et sapien ullamcorper pharetra vestibulum erat wisi condimentum sed commodo vitae ornare sit amet wisi aenean fermentum elit eget tincidunt condimentum eros ipsum rutrum orci sagittis tempus lacus enim ac dui donec non enim in turpis pulvinar facilisis ut felis praesent dapibus neque id cursus faucibus tortor neque egestas augue eu vulputate magna eros eu erat aliquam erat volutpat nam dui mi tincidunt quis accumsan porttitor facilisis luctus metus.</div>
</div>
<div class="th" style="left:267px;top:71px;background:#2ab4c2;border:1.9px solid #fbfbfb;border-bottom-width:2.3px">
 <div class="a" style="left:2.4px;top:3.4px;font:bold 11px/10.7px 'Liberation Sans',sans-serif;color:#15222a;letter-spacing:-0.32px">Fundamentals<br>of Algebra</div>
 <div class="a" style="left:0;top:27.4px;width:104px;height:0.6px;background:#1e98a5"></div>
 <div class="a" style="left:11.8px;top:29.8px;width:10.6px;height:50px;background:#fbfbfb"></div>
 <div class="a" style="left:1.8px;top:29.8px;width:21px;height:14.5px;background:#fbfbfb;clip-path:polygon(48% 0,100% 0,100% 100%,0 100%,0 68%,20% 66%,38% 45%)"></div>
 <div class="a" style="left:76px;top:26.6px;width:25px;height:1.3px;background:#183a40"></div>
 <div class="a lo" style="left:76px;top:28.34px;width:24px;height:16px;font-size:2.38px;line-height:2.65px;color:#14343a">Lorem ipsum dolor sit amet, consectetur adipiscing elit. Aenean tempor aliquet fermentum, elit integer ad vestibulum volutpat. Morbi faucibus neque est, vel odio integer sed nulla magna ultricies. Dolor sit amet congue lorem etiam pellentesque habitant morbi tristique senectus et netus malesuada fames ac turpis egestas. Vestibulum tortor quam, feugiat vitae ultricies eget tempor sit amet ante. Donec eu libero sit amet quam egestas semper aenean ultricies mi vitae est. Mauris placerat eleifend leo quisque sit amet est et sapien ullamcorper pharetra vestibulum erat wisi condimentum sed commodo vitae ornare sit amet wisi aenean fermentum elit eget tincidunt condimentum eros ipsum rutrum orci sagittis tempus lacus enim ac dui donec non enim in turpis pulvinar facilisis ut felis praesent dapibus neque id cursus faucibus tortor neque egestas augue eu vulputate magna eros eu erat aliquam erat volutpat nam dui mi tincidunt quis accumsan porttitor facilisis luctus metus.</div>
</div>
<div class="th" style="left:390.5px;top:71px;background:#f1ede3">
 <svg class="a" style="left:53.6px;top:0" width="53.4" height="78" viewBox="0 0 53.4 78"><rect width="53.4" height="78" fill="#cdc2b4"/><rect width="53.4" height="4" fill="#8a6e56"/><path d="M0 4H53.4V40H0Z" fill="#7e6e60"/><path d="M4 40V16Q26.7 -2 49.4 16V40Z" fill="#a8998a"/><path d="M8 40V20Q26.7 4 45.4 20V40Z" fill="#6e5e50"/><rect x="22" y="13" width="8" height="3" fill="#7a84a8"/><path d="M12 40V28Q26.7 12 41.4 28V40Z" fill="#bcb0a2"/><path d="M15 40V30Q26.7 18 38.4 30V40Z" fill="#7a6a5c"/><path d="M18 40V32Q26.7 24 35.4 32V40Z" fill="#b4bccc"/><path d="M21 40V35Q26.7 29 32.4 35V40Z" fill="#e0d8cc"/><rect x="0" y="4" width="8" height="38" fill="#c8bcae"/><rect x="45.4" y="4" width="8" height="38" fill="#b0a292"/><rect x="0" y="56" width="53.4" height="22" fill="#e2d8cc"/><path d="M0 62H53.4M0 68H53.4M0 74H53.4" stroke="#cfc2b4" stroke-width="0.8"/><rect x="23.5" y="44.6" width="3.1" height="8.8" rx="1" fill="#7a8a9a"/><rect x="44.5" y="38.6" width="2.9" height="8.9" rx="1" fill="#e8e0d0"/><rect x="41.2" y="38.2" width="2.2" height="6.5" rx="1" fill="#b04a38"/><rect x="31.0" y="41.1" width="2.4" height="10.4" rx="1" fill="#4a5478"/><rect x="32.4" y="50.2" width="1.9" height="6.2" rx="1" fill="#c87a48"/><rect x="31.2" y="47.7" width="2.3" height="9.5" rx="1" fill="#c87a48"/><rect x="27.0" y="45.3" width="2.5" height="10.0" rx="1" fill="#d89850"/><rect x="34.0" y="40.7" width="2.6" height="11.6" rx="1" fill="#d8c8b0"/><rect x="36.8" y="41.2" width="2.1" height="7.7" rx="1" fill="#d8c8b0"/><rect x="29.3" y="37.9" width="2.0" height="7.7" rx="1" fill="#d8c8b0"/><rect x="49.8" y="49.9" width="1.8" height="7.3" rx="1" fill="#b04a38"/><rect x="24.4" y="52.5" width="2.4" height="6.4" rx="1" fill="#c87a48"/><rect x="40.5" y="40.3" width="1.9" height="8.0" rx="1" fill="#9a8a70"/><rect x="39.4" y="38.6" width="2.1" height="6.6" rx="1" fill="#b04a38"/><rect x="24.2" y="44.2" width="2.8" height="7.1" rx="1" fill="#7a8a9a"/><rect x="9.9" y="46.8" width="2.0" height="9.9" rx="1" fill="#d8c8b0"/><rect x="20.5" y="50.2" width="1.8" height="11.2" rx="1" fill="#e8e0d0"/><rect x="15.8" y="50.0" width="2.1" height="8.4" rx="1" fill="#e8e0d0"/><rect x="33.4" y="38.0" width="3.2" height="7.3" rx="1" fill="#f0e8dc"/><rect x="0.5" y="45.6" width="3.0" height="8.3" rx="1" fill="#d8c8b0"/><rect x="4.7" y="44.5" width="2.1" height="9.6" rx="1" fill="#6a4a3a"/><rect x="32.4" y="36.5" width="2.6" height="11.0" rx="1" fill="#4a5478"/><rect x="45.1" y="37.2" width="2.0" height="11.5" rx="1" fill="#e8e0d0"/><rect x="13.0" y="37.2" width="2.8" height="11.6" rx="1" fill="#c87a48"/><rect x="35.7" y="43.0" width="2.5" height="6.5" rx="1" fill="#b04a38"/><rect x="5.4" y="36.9" width="3.1" height="7.4" rx="1" fill="#9a8a70"/><rect x="13.4" y="49.3" width="2.6" height="7.8" rx="1" fill="#4a5478"/><rect x="48.3" y="51.2" width="2.0" height="8.9" rx="1" fill="#e8e0d0"/><rect x="31.9" y="40.9" width="3.1" height="7.2" rx="1" fill="#b04a38"/><rect x="3.6" y="43.4" width="2.1" height="6.3" rx="1" fill="#f0e8dc"/><rect x="19.2" y="45.1" width="2.0" height="8.2" rx="1" fill="#d89850"/><rect x="51.0" y="45.8" width="2.8" height="9.5" rx="1" fill="#4a5478"/><rect x="30.7" y="50.7" width="2.5" height="8.1" rx="1" fill="#f0e8dc"/><rect x="50.1" y="35.9" width="2.7" height="8.9" rx="1" fill="#f0e8dc"/><circle cx="16.6" cy="50.0" r="1" fill="#8a6a50"/><circle cx="3.9" cy="45.5" r="1" fill="#8a6a50"/><circle cx="38.3" cy="49.0" r="1" fill="#8a6a50"/><circle cx="38.3" cy="47.0" r="1" fill="#8a6a50"/><circle cx="41.2" cy="49.2" r="1" fill="#8a6a50"/><circle cx="18.3" cy="46.9" r="1" fill="#8a6a50"/><circle cx="46.8" cy="48.7" r="1" fill="#8a6a50"/><circle cx="21.7" cy="47.9" r="1" fill="#8a6a50"/><circle cx="44.9" cy="45.7" r="1" fill="#8a6a50"/><circle cx="32.5" cy="43.8" r="1" fill="#8a6a50"/><circle cx="30.3" cy="46.1" r="1" fill="#8a6a50"/><circle cx="4.2" cy="46.4" r="1" fill="#8a6a50"/><circle cx="51.7" cy="48.8" r="1" fill="#8a6a50"/><circle cx="37.9" cy="43.9" r="1" fill="#8a6a50"/><circle cx="38.2" cy="45.8" r="1" fill="#8a6a50"/><circle cx="22.9" cy="48.4" r="1" fill="#8a6a50"/><circle cx="4.4" cy="47.5" r="1" fill="#8a6a50"/><circle cx="1.5" cy="46.0" r="1" fill="#8a6a50"/><circle cx="25.0" cy="42.3" r="1" fill="#8a6a50"/><circle cx="36.3" cy="45.0" r="1" fill="#8a6a50"/><path d="M14 58h12v14h-12z" fill="#6a584a"/><circle cx="20" cy="58" r="2.4" fill="#7a5a48"/><path d="M2 56h7v18h-7z" fill="#e4dcd0"/><path d="M3 64h5v10h-5z" fill="#a0604a"/><path d="M30 60q6-3 12 0l0 3h-12z" fill="#8a94a8"/><path d="M46 55h7v20h-7z" fill="#7a8a6a"/></svg>
 <div class="a" style="left:0;top:5.8px;width:53.6px;text-align:center;font:italic 2.8px/3px 'Liberation Serif',serif;color:#c0392b">Chapter 1</div>
 <div class="a" style="left:0;top:12.4px;width:53.6px;text-align:center;font:6.5px/5.7px 'Liberation Serif',serif;color:#55504a;letter-spacing:-0.05px">THE HIGH<br>RENAISSANCE</div>
 <div class="a lo" style="left:2.8px;top:31.06px;width:47px;height:23.5px;font-size:2.66px;line-height:2.95px;color:#3a3a3a">Lorem ipsum dolor sit amet, consectetur adipiscing elit. Aenean tempor aliquet fermentum, elit integer ad vestibulum volutpat. Morbi faucibus neque est, vel odio integer sed nulla magna ultricies. Dolor sit amet congue lorem etiam pellentesque habitant morbi tristique senectus et netus malesuada fames ac turpis egestas. Vestibulum tortor quam, feugiat vitae ultricies eget tempor sit amet ante. Donec eu libero sit amet quam egestas semper aenean ultricies mi vitae est. Mauris placerat eleifend leo quisque sit amet est et sapien ullamcorper pharetra vestibulum erat wisi condimentum sed commodo vitae ornare sit amet wisi aenean fermentum elit eget tincidunt condimentum eros ipsum rutrum orci sagittis tempus lacus enim ac dui donec non enim in turpis pulvinar facilisis ut felis praesent dapibus neque id cursus faucibus tortor neque egestas augue eu vulputate magna eros eu erat aliquam erat volutpat nam dui mi tincidunt quis accumsan porttitor facilisis luctus metus.</div>
 </div>
<div class="th" style="left:514px;top:71px;background:#fdfdfd">
 <div class="a" style="left:3.6px;top:3.1px;width:99.9px;height:71.5px;border:0.5px solid #cfcfcf;border-top:1.5px solid #7a7a7a"></div>
 <div class="a" style="left:6.5px;top:7.9px;width:16px;height:1px;background:#e88a70"></div>
 <div class="a" style="left:6.5px;top:9.6px;font:bold 7.6px/8px 'Liberation Sans',sans-serif;color:#1a1a1a;letter-spacing:-0.4px">What is Earth Science?</div>
 <div class="a" style="left:3.6px;top:19.1px;width:99.9px;height:0.5px;background:#ddd"></div>
 <div class="a" style="left:3.6px;top:19.9px;width:99.9px;height:38.6px;overflow:hidden;background:linear-gradient(90deg,#2e2440 0%,#3a2c50 25%,#2e3464 50%,#2a3468 100%)">
  <div class="a" style="left:-6px;top:-4px;width:76px;height:44px;background:radial-gradient(ellipse 50% 65% at 55% 85%,rgba(255,130,40,.85) 0,rgba(240,90,30,.6) 38%,rgba(200,70,50,.25) 70%,rgba(150,50,60,0) 100%)"></div>
  <div class="a" style="left:0;top:15px;width:70px;height:24px;background:#140e0c;clip-path:polygon(0 100%,0 55%,18% 30%,38% 12%,52% 14%,62% 45%,80% 75%,100% 100%)"></div>
  <div class="a" style="left:55px;top:25px;width:32px;height:14px;background:#1c1412;clip-path:polygon(0 100%,35% 0,60% 30%,100% 100%)"></div>
  <div class="a" style="left:82px;top:27px;width:18px;height:12px;background:#1e1614;clip-path:polygon(0 100%,55% 0,100% 30%,100% 100%)"></div>
  <div class="a" style="left:16px;top:14px;width:40px;height:26px;background:radial-gradient(ellipse 45% 60% at 55% 95%,#fff6a0 0,#ffc040 20%,#ff8020 45%,rgba(240,90,20,.6) 70%,rgba(240,90,20,0) 100%)"></div>
 </div>
 <div class="a lo" style="left:6px;top:60.9px;width:92px;height:12px;font-size:2.5px;line-height:2.75px;color:#3a3a3a">Lorem ipsum dolor sit amet, consectetur adipiscing elit. Aenean tempor aliquet fermentum, elit integer ad vestibulum volutpat. Morbi faucibus neque est, vel odio integer sed nulla magna ultricies. Dolor sit amet congue lorem etiam pellentesque habitant morbi tristique senectus et netus malesuada fames ac turpis egestas. Vestibulum tortor quam, feugiat vitae ultricies eget tempor sit amet ante. Donec eu libero sit amet quam egestas semper aenean ultricies mi vitae est. Mauris placerat eleifend leo quisque sit amet est et sapien ullamcorper pharetra vestibulum erat wisi condimentum sed commodo vitae ornare sit amet wisi aenean fermentum elit eget tincidunt condimentum eros ipsum rutrum orci sagittis tempus lacus enim ac dui donec non enim in turpis pulvinar facilisis ut felis praesent dapibus neque id cursus faucibus tortor neque egestas augue eu vulputate magna eros eu erat aliquam erat volutpat nam dui mi tincidunt quis accumsan porttitor facilisis luctus metus.</div>
</div>
<div class="th" style="left:637.5px;top:71px;background:linear-gradient(#e1e6d6,#d4dac6)">
 <div class="a" style="left:0;top:2.4px;width:107px;text-align:center;font:2.4px/2.5px 'Liberation Serif',serif;color:#777">~ CHAPTER 1 ~</div>
 <div class="a" style="left:0;top:7.3px;width:107px;text-align:center;font:6.1px/6.5px 'Liberation Serif',serif;color:#6a6a56;letter-spacing:-0.05px">INSECT CLASSIFICATION</div>
  <div class="a" style="left:5.5px;top:15.2px;width:30px;height:34.6px;background:#f0f0ea;box-shadow:0 0.6px 0.8px rgba(0,0,0,.2)">
  <svg class="a" style="left:0;top:0" width="30" height="34.6" viewBox="0 0 30 34.6"><path d="M16 31 L14.0 8.0" stroke="#b4c49a" stroke-width="0.8"/><path d="M16 31 L15.6 6.8" stroke="#b4c49a" stroke-width="0.8"/><path d="M16 31 L17.2 5.6" stroke="#b4c49a" stroke-width="0.8"/><path d="M16 31 L18.8 4.4" stroke="#b4c49a" stroke-width="0.8"/><path d="M16 31 L20.4 3.2" stroke="#b4c49a" stroke-width="0.8"/><path d="M16 31 L22.0 2.0" stroke="#b4c49a" stroke-width="0.8"/><path d="M16 31 L23.6 3.2" stroke="#b4c49a" stroke-width="0.8"/><path d="M16 31 L25.2 4.4" stroke="#b4c49a" stroke-width="0.8"/><path d="M16 31 L26.8 5.6" stroke="#b4c49a" stroke-width="0.8"/><path d="M16 31 L28.4 6.8" stroke="#b4c49a" stroke-width="0.8"/><path d="M16 31 L30.0 8.0" stroke="#b4c49a" stroke-width="0.8"/><path d="M2 27 Q10 24 20 30 L20 34.6 L2 34.6Z" fill="#8a9e5e"/><path d="M3 8 L11 10 L19 17 L27 28 L24 31 L15 31 L9 26 L5 18Z" fill="#263022"/><ellipse cx="8" cy="14" rx="2.2" ry="1.3" fill="#a4c884"/><ellipse cx="12" cy="19" rx="2.6" ry="1.4" fill="#98c078"/><ellipse cx="17" cy="24" rx="2.6" ry="1.3" fill="#a8cc88"/><ellipse cx="13" cy="26" rx="1.8" ry="1" fill="#98c078"/><ellipse cx="21" cy="27" rx="1.8" ry="1" fill="#a4c884"/><ellipse cx="9" cy="20" rx="1.4" ry="1" fill="#90b870"/></svg>
 </div>
  <div class="a" style="left:37.8px;top:15.2px;width:64px;height:34.6px;background:#f4f4f0;box-shadow:0 0.6px 0.8px rgba(0,0,0,.2)">
  <svg class="a" style="left:0;top:0" width="64" height="34.6" viewBox="0 0 64 34.6"><path d="M10 34.6 Q13 20 8 1" stroke="#6aa24e" stroke-width="1.5" fill="none"/><path d="M19 34.6 Q17 18 21 3" stroke="#7ab05e" stroke-width="1.1" fill="none"/><path d="M27 34.6 Q30 22 24 10" stroke="#74aa58" stroke-width="1" fill="none"/><path d="M47 34.6 Q50 18 45 2" stroke="#6aa24e" stroke-width="1.3" fill="none"/><path d="M56 34.6 Q58 16 63 5" stroke="#7ab05e" stroke-width="1.2" fill="none"/><ellipse cx="38" cy="11" rx="12" ry="4.5" transform="rotate(-25 38 11)" fill="#e2e2dc" stroke="#b8b8b0" stroke-width="0.4"/><ellipse cx="42" cy="22" rx="11" ry="4.2" transform="rotate(35 42 22)" fill="#e6e6e0" stroke="#b8b8b0" stroke-width="0.4"/><ellipse cx="22" cy="24" rx="7" ry="2.6" transform="rotate(-10 22 24)" fill="#e4e4de" stroke="#c0c0b8" stroke-width="0.4"/><path d="M36 19 L60 5" stroke="#4e4a1a" stroke-width="2.4"/><path d="M8 5 L30 11" stroke="#3a9aa8" stroke-width="1"/><ellipse cx="11" cy="3.5" rx="1.6" ry="1.2" fill="#2a5cb0"/><ellipse cx="13" cy="14" rx="1.4" ry="2" fill="#2a5cb0"/></svg>
 </div>
 <div class="a" style="left:5.5px;top:52px;width:47.5px;height:21.8px;background:#f6f6f2;box-shadow:0 0.6px 0.8px rgba(0,0,0,.2)">
  <div class="a lo" style="left:2.5px;top:1.56px;width:41px;height:18px;font-size:2.29px;line-height:2.55px;color:#3a3a3a">Lorem ipsum dolor sit amet, consectetur adipiscing elit. Aenean tempor aliquet fermentum, elit integer ad vestibulum volutpat. Morbi faucibus neque est, vel odio integer sed nulla magna ultricies. Dolor sit amet congue lorem etiam pellentesque habitant morbi tristique senectus et netus malesuada fames ac turpis egestas. Vestibulum tortor quam, feugiat vitae ultricies eget tempor sit amet ante. Donec eu libero sit amet quam egestas semper aenean ultricies mi vitae est. Mauris placerat eleifend leo quisque sit amet est et sapien ullamcorper pharetra vestibulum erat wisi condimentum sed commodo vitae ornare sit amet wisi aenean fermentum elit eget tincidunt condimentum eros ipsum rutrum orci sagittis tempus lacus enim ac dui donec non enim in turpis pulvinar facilisis ut felis praesent dapibus neque id cursus faucibus tortor neque egestas augue eu vulputate magna eros eu erat aliquam erat volutpat nam dui mi tincidunt quis accumsan porttitor facilisis luctus metus.</div>
 </div>
 <div class="a" style="left:56.3px;top:52.7px;width:45.2px;height:20.4px;background:repeating-linear-gradient(170deg,rgba(230,190,100,.55) 0 0.8px,transparent 0.8px 3.5px),linear-gradient(160deg,#9a7040 0%,#b08850 30%,#8a6234 55%,#a88048 80%,#7a5428 100%);box-shadow:0 0.6px 0.8px rgba(0,0,0,.2)"></div>
</div>
<div class="th" style="left:761px;top:71px;background:linear-gradient(#24407e 0%,#304e90 14%,#4a68a6 26%,#7a90bc 33%,#a8a8b4 37%,#8898b8 41%,#7a8cb0 60%,#5e6e94 100%)">
 <div class="a" style="left:30px;top:0;width:77px;height:20px;background:radial-gradient(ellipse 50% 45% at 50% 40%,rgba(225,235,250,.85) 0,rgba(180,200,235,.45) 55%,rgba(150,180,230,0) 100%)"></div>
 <div class="a" style="left:0;top:4px;width:45px;height:18px;background:radial-gradient(ellipse 50% 50% at 45% 50%,rgba(30,45,80,.55) 0,rgba(30,45,80,0) 100%)"></div>
 <div class="a" style="left:0;top:16px;width:46px;height:26px;background:radial-gradient(ellipse 50% 50% at 38% 48%,#fffef0 0,#fbe6a0 14%,rgba(245,200,120,.8) 30%,rgba(220,180,130,.3) 65%,rgba(220,180,130,0) 100%)"></div>
 <div class="a" style="left:6px;top:33px;width:24px;height:40px;background:radial-gradient(ellipse 50% 50% at 50% 30%,rgba(245,225,160,.65) 0,rgba(220,210,170,.2) 60%,rgba(220,210,170,0) 100%)"></div>
 <div class="a" style="left:14px;top:22px;width:93px;height:17px;background:#1a2a16;clip-path:polygon(0 100%,3% 62%,14% 54%,24% 38%,42% 32%,62% 26%,80% 12%,100% 0,100% 100%,30% 100%)"></div>
 <div class="a" style="left:34px;top:23px;width:73px;height:13px;background:linear-gradient(90deg,#2a4420,#3e6a2a 50%,#4a7a30);clip-path:polygon(0 60%,35% 40%,60% 30%,100% 0,100% 100%,0 100%)"></div>
 <div class="a" style="left:28px;top:52px;width:79px;height:26px;background:linear-gradient(#8ab838,#a2c440 45%,#6a9a2a);clip-path:polygon(0 100%,10% 70%,20% 40%,35% 12%,50% 0,100% 0,100% 100%)"></div>
 <div class="a" style="left:59.8px;top:32.7px;width:46.4px;height:38.8px;background:#fcfcfc">
  <div class="a" style="left:3.5px;top:2.5px;width:2px;height:0.8px;background:#888"></div>
  <div class="a" style="left:3.3px;top:8.2px;font:4.5px/4.3px 'Liberation Sans',sans-serif;color:#3a3a3a;letter-spacing:-0.15px">ISLAND<br>ADVENTURE</div>
  <div class="a lo" style="left:3.5px;top:17.5px;width:39px;height:18px;font-size:1.9px;line-height:2.15px;color:#3a3a3a">Lorem ipsum dolor sit amet, consectetur adipiscing elit. Aenean tempor aliquet fermentum, elit integer ad vestibulum volutpat. Morbi faucibus neque est, vel odio integer sed nulla magna ultricies. Dolor sit amet congue lorem etiam pellentesque habitant morbi tristique senectus et netus malesuada fames ac turpis egestas. Vestibulum tortor quam, feugiat vitae ultricies eget tempor sit amet ante. Donec eu libero sit amet quam egestas semper aenean ultricies mi vitae est. Mauris placerat eleifend leo quisque sit amet est et sapien ullamcorper pharetra vestibulum erat wisi condimentum sed commodo vitae ornare sit amet wisi aenean fermentum elit eget tincidunt condimentum eros ipsum rutrum orci sagittis tempus lacus enim ac dui donec non enim in turpis pulvinar facilisis ut felis praesent dapibus neque id cursus faucibus tortor neque egestas augue eu vulputate magna eros eu erat aliquam erat volutpat nam dui mi tincidunt quis accumsan porttitor facilisis luctus metus.</div>
 </div>
</div>
<div class="lb" style="left:12px;top:155px">Basic</div>
<div class="lb" style="left:135.5px;top:155px">Contemporary</div>
<div class="lb" style="left:259px;top:155px">Modern Type</div>
<div class="lb" style="left:382.5px;top:155px">Classic</div>
<div class="lb" style="left:506px;top:155px">Editorial</div>
<div class="lb" style="left:629.5px;top:155px">Craft</div>
<div class="lb" style="left:753px;top:155px">Photo Book</div>

<!-- row 2 -->
<div class="th" style="left:20.4px;top:185.5px;width:106.8px;height:78px;background:#b8d0d6">
 <svg class="a" style="left:0;top:0" width="106.8" height="78" viewBox="0 0 106.8 78"><defs><pattern id="hat" width="1.6" height="1.6" patternUnits="userSpaceOnUse" patternTransform="rotate(20)"><rect width="1.6" height="0.5" fill="rgba(30,60,75,.16)"/></pattern><linearGradient id="sky" x1="0" y1="0" x2="0" y2="1"><stop offset="0" stop-color="#d4e6ea"/><stop offset=".35" stop-color="#bcd4da"/><stop offset="1" stop-color="#9ab8c0"/></linearGradient></defs><rect width="106.8" height="78" fill="url(#sky)"/><path d="M0 22 L12 18 L25 24 L40 16 L58 22 L66 28 L66 52 L0 52Z" fill="#86a8b2"/><path d="M44 52 L50 34 L58 27 L70 14 L82 10 L92 6 L100 4 L106.8 6 L106.8 52Z" fill="#4a7282"/><path d="M60 50 L70 22 L84 12 L100 8 L106.8 10 L106.8 50Z" fill="#3a6272"/><path d="M0 48 Q30 46 106.8 50 L106.8 78 L0 78Z" fill="#a4c0c8"/><path d="M23.8 64.7 q3.5 -1.2 7.0 0" stroke="#5e8492" stroke-width="0.7" fill="none"/><path d="M60.4 66.9 q2.3 -1.2 4.5 0" stroke="#5e8492" stroke-width="0.7" fill="none"/><path d="M1.3 72.6 q3.0 -1.2 6.1 0" stroke="#5e8492" stroke-width="0.7" fill="none"/><path d="M23.4 76.9 q3.9 -1.2 7.8 0" stroke="#5e8492" stroke-width="0.7" fill="none"/><path d="M83.6 62.9 q4.6 -1.2 9.1 0" stroke="#5e8492" stroke-width="0.7" fill="none"/><path d="M15.1 67.1 q5.5 -1.2 10.9 0" stroke="#5e8492" stroke-width="0.7" fill="none"/><path d="M52.3 70.0 q4.7 -1.2 9.4 0" stroke="#5e8492" stroke-width="0.7" fill="none"/><path d="M6.4 70.5 q4.4 -1.2 8.7 0" stroke="#5e8492" stroke-width="0.7" fill="none"/><path d="M30.1 50.8 q5.5 -1.2 10.9 0" stroke="#5e8492" stroke-width="0.7" fill="none"/><path d="M47.3 69.4 q5.5 -1.2 11.0 0" stroke="#5e8492" stroke-width="0.7" fill="none"/><path d="M71.4 74.9 q3.6 -1.2 7.2 0" stroke="#5e8492" stroke-width="0.7" fill="none"/><path d="M80.1 62.0 q5.7 -1.2 11.5 0" stroke="#5e8492" stroke-width="0.7" fill="none"/><path d="M87.9 52.6 q2.5 -1.2 5.1 0" stroke="#5e8492" stroke-width="0.7" fill="none"/><path d="M21.7 76.1 q3.7 -1.2 7.5 0" stroke="#5e8492" stroke-width="0.7" fill="none"/><path d="M62.7 58.1 q4.0 -1.2 8.1 0" stroke="#5e8492" stroke-width="0.7" fill="none"/><path d="M38.6 59.5 q4.3 -1.2 8.7 0" stroke="#5e8492" stroke-width="0.7" fill="none"/><path d="M58.4 74.4 q4.7 -1.2 9.5 0" stroke="#5e8492" stroke-width="0.7" fill="none"/><path d="M92.9 73.1 q6.0 -1.2 11.9 0" stroke="#5e8492" stroke-width="0.7" fill="none"/><path d="M67.1 54.4 q5.4 -1.2 10.9 0" stroke="#5e8492" stroke-width="0.7" fill="none"/><path d="M96.5 74.4 q4.3 -1.2 8.6 0" stroke="#5e8492" stroke-width="0.7" fill="none"/><path d="M71.4 55.7 q5.3 -1.2 10.7 0" stroke="#5e8492" stroke-width="0.7" fill="none"/><path d="M57.4 57.7 q2.3 -1.2 4.5 0" stroke="#5e8492" stroke-width="0.7" fill="none"/><path d="M85.4 76.7 q2.4 -1.2 4.7 0" stroke="#5e8492" stroke-width="0.7" fill="none"/><path d="M80.1 61.1 q2.6 -1.2 5.2 0" stroke="#5e8492" stroke-width="0.7" fill="none"/><path d="M29.4 70.8 q5.5 -1.2 11.0 0" stroke="#5e8492" stroke-width="0.7" fill="none"/><path d="M4.4 66.6 q2.2 -1.2 4.4 0" stroke="#5e8492" stroke-width="0.7" fill="none"/><path d="M71.8 58.9 q5.5 -1.2 11.0 0" stroke="#5e8492" stroke-width="0.7" fill="none"/><path d="M98.1 63.6 q6.0 -1.2 12.0 0" stroke="#5e8492" stroke-width="0.7" fill="none"/><path d="M31.0 52.1 q4.4 -1.2 8.8 0" stroke="#5e8492" stroke-width="0.7" fill="none"/><path d="M3.1 55.3 q3.6 -1.2 7.3 0" stroke="#5e8492" stroke-width="0.7" fill="none"/><path d="M61.0 54.2 q2.2 -1.2 4.3 0" stroke="#5e8492" stroke-width="0.7" fill="none"/><path d="M86.8 58.5 q5.8 -1.2 11.7 0" stroke="#5e8492" stroke-width="0.7" fill="none"/><path d="M89.7 60.2 q3.8 -1.2 7.7 0" stroke="#5e8492" stroke-width="0.7" fill="none"/><path d="M52.0 67.4 q4.4 -1.2 8.8 0" stroke="#5e8492" stroke-width="0.7" fill="none"/><path d="M55.9 66.7 q5.8 -1.2 11.5 0" stroke="#5e8492" stroke-width="0.7" fill="none"/><path d="M50.7 61.6 q4.9 -1.2 9.8 0" stroke="#5e8492" stroke-width="0.7" fill="none"/><path d="M23.8 58.1 q5.9 -1.2 11.8 0" stroke="#5e8492" stroke-width="0.7" fill="none"/><path d="M52.1 64.8 q2.0 -1.2 4.1 0" stroke="#5e8492" stroke-width="0.7" fill="none"/><path d="M41.5 65.7 q2.1 -1.2 4.2 0" stroke="#5e8492" stroke-width="0.7" fill="none"/><path d="M61.6 67.1 q2.2 -1.2 4.5 0" stroke="#5e8492" stroke-width="0.7" fill="none"/><path d="M0 66 Q50 62 106.8 68 L106.8 78 L0 78Z" fill="rgba(70,110,125,.45)"/><path d="M64 48 L70 30 L80 26 L90 24 L88 44 L78 52Z" fill="#e2ecee"/><path d="M72 30 L80 16 L86 22 L84 30Z" fill="#d4e2e6"/><path d="M60 52 L92 46 L90 58 L66 62Z" fill="#2a4652"/><path d="M70 54 L84 14 M78 52 L92 20 M62 48 L92 34" stroke="#2a4450" stroke-width="0.7"/><path d="M97 44 L106 42 L106 55 L98 55Z" fill="#d0dfe2"/><path d="M96 54 L106 53 L106 58 L97 58Z" fill="#3a5a66"/><rect width="106.8" height="78" fill="url(#hat)"/></svg>
 <div class="a" style="left:5.2px;top:5.1px;width:40.2px;height:68.2px;background:rgba(58,62,64,.88);border-radius:1.2px">
  <div class="a" style="left:0;top:3.6px;width:40px;text-align:center;font:2.6px/3px 'Liberation Serif',serif;color:#d8d8d8;letter-spacing:0.2px">CHAPTER 1</div>
  <div class="a" style="left:15px;top:7.4px;width:10px;height:0.5px;background:#999"></div>
  <div class="a" style="left:0;top:10.2px;width:40px;text-align:center;font:4.4px/4.5px 'Liberation Serif',serif;color:#dcdcdc">SAILING THE<br>SOUTH ATLANTIC</div>
  <div class="a lo" style="left:3.5px;top:21.5px;width:33px;height:32px;font-size:1.95px;line-height:2.1px;color:#e8e8e8">Lorem ipsum dolor sit amet, consectetur adipiscing elit. Aenean tempor aliquet fermentum, elit integer ad vestibulum volutpat. Morbi faucibus neque est, vel odio integer sed nulla magna ultricies. Dolor sit amet congue lorem etiam pellentesque habitant morbi tristique senectus et netus malesuada fames ac turpis egestas. Vestibulum tortor quam, feugiat vitae ultricies eget tempor sit amet ante. Donec eu libero sit amet quam egestas semper aenean ultricies mi vitae est. Mauris placerat eleifend leo quisque sit amet est et sapien ullamcorper pharetra vestibulum erat wisi condimentum sed commodo vitae ornare sit amet wisi aenean fermentum elit eget tincidunt condimentum eros ipsum rutrum orci sagittis tempus lacus enim ac dui donec non enim in turpis pulvinar facilisis ut felis praesent dapibus neque id cursus faucibus tortor neque egestas augue eu vulputate magna eros eu erat aliquam erat volutpat nam dui mi tincidunt quis accumsan porttitor facilisis luctus metus.</div>
 </div>
</div>
<div class="th" style="left:143.6px;top:185.5px;width:106.5px;height:78px;background:#c8a860">
 <svg class="a" style="left:0;top:19.5px" width="106.5" height="58.5" viewBox="0 0 106.5 58.5"><defs><radialGradient id="qg" cx="55%" cy="40%" r="70%"><stop offset="0" stop-color="#ecd694"/><stop offset=".6" stop-color="#dcc07a"/><stop offset="1" stop-color="#a88848"/></radialGradient></defs><rect width="106.5" height="58.5" fill="url(#qg)"/><circle cx="44.6" cy="8.3" r="0.7" fill="#f2e2a8"/><circle cx="64.0" cy="20.1" r="1.2" fill="#f2e2a8"/><circle cx="34.6" cy="4.7" r="0.7" fill="#f6e8b8"/><circle cx="23.3" cy="23.3" r="0.8" fill="#a88440"/><circle cx="35.4" cy="34.5" r="1.0" fill="#f2e2a8"/><circle cx="51.3" cy="53.7" r="1.0" fill="#f2e2a8"/><circle cx="27.2" cy="23.1" r="0.8" fill="#a88440"/><circle cx="43.2" cy="44.9" r="0.8" fill="#e8d090"/><circle cx="67.3" cy="10.3" r="1.0" fill="#f2e2a8"/><circle cx="20.7" cy="3.3" r="1.0" fill="#e8d090"/><circle cx="63.7" cy="42.7" r="1.1" fill="#f6e8b8"/><circle cx="56.5" cy="16.5" r="1.1" fill="#e8d090"/><circle cx="37.3" cy="31.6" r="1.0" fill="#a88440"/><circle cx="46.4" cy="24.7" r="1.3" fill="#a88440"/><circle cx="25.8" cy="23.0" r="0.8" fill="#b89048"/><circle cx="59.7" cy="2.2" r="1.2" fill="#f2e2a8"/><circle cx="67.4" cy="48.2" r="0.9" fill="#b89048"/><circle cx="47.0" cy="27.3" r="0.7" fill="#f6e8b8"/><circle cx="23.6" cy="14.8" r="0.7" fill="#f2e2a8"/><circle cx="79.2" cy="35.6" r="0.9" fill="#f6e8b8"/><circle cx="50.3" cy="36.8" r="1.3" fill="#f2e2a8"/><circle cx="47.5" cy="33.6" r="0.7" fill="#f6e8b8"/><circle cx="85.3" cy="7.1" r="0.9" fill="#e8d090"/><circle cx="98.9" cy="27.3" r="1.0" fill="#e8d090"/><circle cx="65.3" cy="48.6" r="1.2" fill="#f6e8b8"/><circle cx="40.5" cy="22.8" r="1.1" fill="#b89048"/><circle cx="49.8" cy="12.7" r="0.8" fill="#f2e2a8"/><circle cx="36.2" cy="12.8" r="1.2" fill="#f6e8b8"/><circle cx="31.7" cy="15.5" r="1.0" fill="#e8d090"/><circle cx="48.8" cy="31.1" r="1.1" fill="#e8d090"/><circle cx="62.2" cy="34.0" r="1.0" fill="#f2e2a8"/><circle cx="94.7" cy="52.4" r="0.9" fill="#a88440"/><circle cx="51.5" cy="5.7" r="0.7" fill="#f6e8b8"/><circle cx="21.2" cy="11.5" r="0.8" fill="#e8d090"/><circle cx="70.0" cy="5.6" r="0.8" fill="#a88440"/><circle cx="24.3" cy="20.0" r="0.7" fill="#f2e2a8"/><circle cx="34.0" cy="20.7" r="1.3" fill="#b89048"/><circle cx="70.1" cy="26.1" r="1.2" fill="#f2e2a8"/><circle cx="105.9" cy="25.6" r="0.9" fill="#f6e8b8"/><circle cx="28.2" cy="41.2" r="1.0" fill="#b89048"/><circle cx="78.3" cy="28.4" r="1.3" fill="#e8d090"/><circle cx="63.3" cy="8.1" r="1.2" fill="#a88440"/><circle cx="84.4" cy="16.4" r="1.1" fill="#f2e2a8"/><circle cx="38.9" cy="20.2" r="0.9" fill="#e8d090"/><circle cx="35.4" cy="29.8" r="0.9" fill="#a88440"/><circle cx="35.4" cy="44.6" r="1.2" fill="#e8d090"/><circle cx="89.9" cy="40.7" r="0.8" fill="#e8d090"/><circle cx="60.1" cy="40.2" r="1.2" fill="#f2e2a8"/><circle cx="58.2" cy="10.7" r="1.3" fill="#a88440"/><circle cx="55.9" cy="51.5" r="1.3" fill="#b89048"/><circle cx="48.4" cy="12.1" r="1.0" fill="#e8d090"/><circle cx="45.9" cy="26.5" r="1.2" fill="#a88440"/><circle cx="58.9" cy="35.9" r="1.2" fill="#f2e2a8"/><circle cx="26.0" cy="21.4" r="1.0" fill="#e8d090"/><circle cx="31.3" cy="43.4" r="0.8" fill="#b89048"/><circle cx="101.6" cy="39.7" r="0.9" fill="#f6e8b8"/><circle cx="101.6" cy="39.9" r="1.3" fill="#e8d090"/><circle cx="17.5" cy="32.5" r="1.2" fill="#f6e8b8"/><circle cx="28.4" cy="45.5" r="1.1" fill="#f6e8b8"/><circle cx="47.1" cy="30.2" r="0.7" fill="#e8d090"/><circle cx="88.1" cy="40.0" r="1.0" fill="#f2e2a8"/><circle cx="100.4" cy="23.9" r="1.2" fill="#e8d090"/><circle cx="34.3" cy="13.9" r="1.0" fill="#b89048"/><circle cx="84.9" cy="17.9" r="1.0" fill="#a88440"/><circle cx="27.0" cy="50.1" r="1.2" fill="#b89048"/><circle cx="75.6" cy="44.8" r="1.0" fill="#a88440"/><circle cx="99.0" cy="27.6" r="0.8" fill="#a88440"/><circle cx="61.7" cy="48.0" r="1.1" fill="#e8d090"/><circle cx="86.0" cy="8.2" r="1.0" fill="#e8d090"/><circle cx="81.4" cy="30.6" r="1.1" fill="#b89048"/><circle cx="63.6" cy="26.5" r="1.2" fill="#f2e2a8"/><circle cx="20.2" cy="10.5" r="1.2" fill="#f2e2a8"/><circle cx="61.5" cy="30.9" r="1.0" fill="#f2e2a8"/><circle cx="71.0" cy="27.8" r="0.8" fill="#a88440"/><circle cx="40.4" cy="27.9" r="1.0" fill="#f6e8b8"/><circle cx="37.7" cy="28.8" r="1.3" fill="#b89048"/><circle cx="96.7" cy="11.1" r="0.8" fill="#f6e8b8"/><circle cx="26.1" cy="24.3" r="1.1" fill="#f2e2a8"/><circle cx="54.2" cy="11.7" r="1.2" fill="#b89048"/><circle cx="97.1" cy="8.5" r="0.8" fill="#b89048"/><circle cx="95.8" cy="53.2" r="1.1" fill="#e8d090"/><circle cx="23.6" cy="48.7" r="1.3" fill="#e8d090"/><circle cx="91.2" cy="8.9" r="1.3" fill="#f6e8b8"/><circle cx="51.9" cy="23.2" r="0.9" fill="#b89048"/><circle cx="81.1" cy="1.1" r="1.0" fill="#a88440"/><circle cx="79.3" cy="21.1" r="1.1" fill="#a88440"/><circle cx="61.9" cy="3.5" r="1.3" fill="#e8d090"/><circle cx="24.6" cy="14.6" r="1.2" fill="#f2e2a8"/><circle cx="31.6" cy="41.6" r="1.2" fill="#f6e8b8"/><circle cx="76.9" cy="52.0" r="0.8" fill="#f6e8b8"/><circle cx="99.1" cy="31.4" r="0.8" fill="#b89048"/><circle cx="20.3" cy="37.9" r="1.2" fill="#f6e8b8"/><circle cx="39.6" cy="0.9" r="1.2" fill="#f2e2a8"/><circle cx="22.7" cy="47.1" r="0.9" fill="#f2e2a8"/><circle cx="26.1" cy="0.6" r="1.0" fill="#a88440"/><circle cx="98.8" cy="34.2" r="1.0" fill="#f2e2a8"/><circle cx="36.8" cy="6.0" r="0.9" fill="#e8d090"/><circle cx="31.6" cy="51.3" r="1.0" fill="#b89048"/><circle cx="33.8" cy="24.5" r="0.9" fill="#e8d090"/><circle cx="88.5" cy="54.7" r="0.7" fill="#f2e2a8"/><circle cx="82.1" cy="30.3" r="1.0" fill="#e8d090"/><circle cx="37.5" cy="24.6" r="1.1" fill="#f6e8b8"/><circle cx="65.0" cy="48.9" r="0.9" fill="#a88440"/><circle cx="34.7" cy="12.6" r="1.2" fill="#e8d090"/><circle cx="79.7" cy="35.0" r="1.3" fill="#f6e8b8"/><circle cx="104.8" cy="46.0" r="0.7" fill="#f2e2a8"/><circle cx="82.8" cy="14.1" r="0.7" fill="#e8d090"/><circle cx="75.9" cy="20.9" r="1.1" fill="#a88440"/><circle cx="40.8" cy="13.3" r="0.7" fill="#b89048"/><circle cx="32.0" cy="14.8" r="0.9" fill="#f2e2a8"/><circle cx="103.0" cy="53.5" r="0.9" fill="#a88440"/><circle cx="18.2" cy="48.5" r="0.9" fill="#e8d090"/><circle cx="15.1" cy="21.0" r="0.9" fill="#f6e8b8"/><circle cx="75.0" cy="13.6" r="0.8" fill="#f2e2a8"/><circle cx="89.8" cy="7.9" r="0.7" fill="#a88440"/><circle cx="17.1" cy="16.7" r="0.8" fill="#e8d090"/><circle cx="102.6" cy="46.9" r="1.1" fill="#e8d090"/><circle cx="80.5" cy="48.3" r="1.2" fill="#f6e8b8"/><circle cx="80.9" cy="27.2" r="1.1" fill="#b89048"/><circle cx="73.9" cy="2.4" r="1.1" fill="#a88440"/><circle cx="82.1" cy="44.7" r="1.2" fill="#e8d090"/><circle cx="83.9" cy="31.3" r="1.2" fill="#f2e2a8"/><circle cx="68.4" cy="49.1" r="0.8" fill="#e8d090"/><circle cx="18.8" cy="35.0" r="0.9" fill="#f2e2a8"/><circle cx="56.3" cy="2.8" r="1.1" fill="#f2e2a8"/><circle cx="77.3" cy="26.9" r="1.0" fill="#f2e2a8"/><circle cx="21.4" cy="51.3" r="0.8" fill="#a88440"/><circle cx="63.1" cy="41.0" r="0.9" fill="#f6e8b8"/><circle cx="21.8" cy="14.6" r="0.8" fill="#e8d090"/><circle cx="74.5" cy="25.3" r="0.7" fill="#f6e8b8"/><circle cx="98.3" cy="15.8" r="1.1" fill="#f2e2a8"/><circle cx="73.8" cy="4.3" r="0.9" fill="#e8d090"/><circle cx="74.6" cy="38.1" r="1.0" fill="#a88440"/><circle cx="16.1" cy="3.3" r="1.3" fill="#b89048"/><circle cx="24.1" cy="12.0" r="0.9" fill="#f6e8b8"/><circle cx="62.3" cy="25.6" r="1.2" fill="#f6e8b8"/><circle cx="105.9" cy="30.2" r="1.3" fill="#b89048"/><circle cx="100.7" cy="1.0" r="0.7" fill="#f6e8b8"/><circle cx="61.4" cy="54.7" r="0.9" fill="#b89048"/><circle cx="98.9" cy="51.2" r="1.0" fill="#f2e2a8"/><circle cx="28.0" cy="28.8" r="0.8" fill="#b89048"/><circle cx="90.0" cy="28.0" r="1.1" fill="#f2e2a8"/><circle cx="36.2" cy="49.4" r="0.9" fill="#f6e8b8"/><circle cx="29.6" cy="52.2" r="0.9" fill="#f6e8b8"/><circle cx="81.5" cy="22.9" r="0.9" fill="#f6e8b8"/><circle cx="91.9" cy="0.1" r="1.2" fill="#b89048"/><circle cx="26.0" cy="51.0" r="1.2" fill="#f2e2a8"/><circle cx="41.5" cy="20.5" r="0.9" fill="#f6e8b8"/><circle cx="94.6" cy="4.2" r="1.2" fill="#f6e8b8"/><circle cx="93.2" cy="15.4" r="1.2" fill="#f2e2a8"/><circle cx="41.1" cy="51.5" r="1.3" fill="#e8d090"/><circle cx="54.9" cy="17.4" r="1.2" fill="#b89048"/><circle cx="54.1" cy="1.6" r="1.2" fill="#f6e8b8"/><circle cx="101.1" cy="30.2" r="0.7" fill="#f2e2a8"/><circle cx="82.0" cy="24.8" r="1.1" fill="#e8d090"/><circle cx="41.2" cy="2.7" r="0.8" fill="#a88440"/><circle cx="58.2" cy="18.9" r="0.9" fill="#b89048"/><circle cx="82.6" cy="35.9" r="1.1" fill="#f6e8b8"/><circle cx="42.5" cy="30.7" r="0.8" fill="#f6e8b8"/><circle cx="73.9" cy="4.1" r="1.2" fill="#a88440"/><circle cx="60.5" cy="12.1" r="1.3" fill="#b89048"/><circle cx="56.2" cy="7.7" r="0.8" fill="#e8d090"/><circle cx="31.0" cy="30.6" r="0.8" fill="#b89048"/><circle cx="38.6" cy="31.3" r="1.1" fill="#f2e2a8"/><circle cx="52.8" cy="22.8" r="0.8" fill="#a88440"/><circle cx="39.7" cy="41.4" r="0.9" fill="#f6e8b8"/><circle cx="103.5" cy="6.9" r="1.0" fill="#a88440"/><circle cx="87.3" cy="46.7" r="0.9" fill="#f2e2a8"/><circle cx="37.7" cy="22.0" r="1.0" fill="#f6e8b8"/><circle cx="43.5" cy="44.8" r="0.8" fill="#f2e2a8"/><circle cx="53.9" cy="42.0" r="1.3" fill="#f6e8b8"/><circle cx="59.8" cy="4.0" r="1.2" fill="#a88440"/><circle cx="104.0" cy="13.7" r="0.8" fill="#f2e2a8"/><circle cx="28.9" cy="53.5" r="1.3" fill="#f2e2a8"/><circle cx="81.0" cy="35.6" r="0.8" fill="#f6e8b8"/><circle cx="86.1" cy="0.1" r="0.8" fill="#e8d090"/><circle cx="99.2" cy="35.5" r="1.3" fill="#b89048"/><circle cx="72.3" cy="29.1" r="1.1" fill="#f6e8b8"/><circle cx="25.3" cy="3.9" r="1.3" fill="#a88440"/><circle cx="32.5" cy="14.3" r="0.7" fill="#a88440"/><circle cx="64.2" cy="54.8" r="1.3" fill="#b89048"/><circle cx="74.0" cy="48.6" r="1.0" fill="#f6e8b8"/><circle cx="65.1" cy="1.6" r="1.1" fill="#f6e8b8"/><circle cx="43.1" cy="1.2" r="1.2" fill="#f6e8b8"/><circle cx="74.2" cy="4.5" r="1.1" fill="#e8d090"/><circle cx="99.7" cy="12.5" r="1.1" fill="#f2e2a8"/><circle cx="80.7" cy="19.9" r="0.8" fill="#f6e8b8"/><circle cx="87.9" cy="40.7" r="0.7" fill="#a88440"/><circle cx="60.4" cy="11.0" r="0.8" fill="#e8d090"/><circle cx="35.3" cy="41.8" r="0.8" fill="#b89048"/><circle cx="72.1" cy="33.6" r="1.0" fill="#e8d090"/><circle cx="98.3" cy="3.1" r="0.8" fill="#a88440"/><circle cx="51.0" cy="11.7" r="0.8" fill="#a88440"/><circle cx="19.7" cy="3.3" r="1.0" fill="#f6e8b8"/><circle cx="80.2" cy="17.3" r="1.3" fill="#f2e2a8"/><circle cx="100.2" cy="18.1" r="1.1" fill="#e8d090"/><circle cx="63.0" cy="25.7" r="1.1" fill="#b89048"/><circle cx="49.6" cy="20.6" r="1.0" fill="#b89048"/><circle cx="25.0" cy="4.3" r="0.9" fill="#f2e2a8"/><circle cx="102.4" cy="6.8" r="0.9" fill="#e8d090"/><circle cx="85.3" cy="17.0" r="0.8" fill="#f6e8b8"/><circle cx="79.5" cy="10.8" r="1.3" fill="#a88440"/><circle cx="32.7" cy="20.0" r="0.7" fill="#f6e8b8"/><circle cx="52.6" cy="44.7" r="0.7" fill="#f6e8b8"/><circle cx="18.2" cy="3.4" r="0.9" fill="#f2e2a8"/><circle cx="83.4" cy="49.4" r="0.9" fill="#b89048"/><circle cx="45.6" cy="52.5" r="0.9" fill="#f2e2a8"/><circle cx="80.6" cy="17.4" r="0.9" fill="#b89048"/><circle cx="81.0" cy="32.8" r="0.7" fill="#f2e2a8"/><circle cx="36.4" cy="26.1" r="1.3" fill="#f6e8b8"/><circle cx="50.4" cy="13.8" r="1.2" fill="#f6e8b8"/><circle cx="27.1" cy="27.3" r="1.2" fill="#f2e2a8"/><circle cx="82.6" cy="45.3" r="1.1" fill="#e8d090"/><circle cx="45.0" cy="17.6" r="1.2" fill="#b89048"/><circle cx="69.5" cy="28.2" r="1.2" fill="#f6e8b8"/><circle cx="37.6" cy="3.6" r="1.0" fill="#f2e2a8"/><circle cx="64.8" cy="8.8" r="1.2" fill="#f6e8b8"/><circle cx="105.4" cy="14.6" r="0.8" fill="#f2e2a8"/><circle cx="53.5" cy="54.4" r="0.8" fill="#f6e8b8"/><circle cx="27.2" cy="25.4" r="1.1" fill="#e8d090"/><circle cx="92.5" cy="36.5" r="1.2" fill="#f2e2a8"/><circle cx="41.9" cy="15.4" r="0.9" fill="#b89048"/><circle cx="82.5" cy="11.0" r="0.8" fill="#e8d090"/><circle cx="36.5" cy="15.5" r="0.8" fill="#a88440"/><circle cx="20.9" cy="13.8" r="1.0" fill="#e8d090"/><circle cx="36.2" cy="44.5" r="1.3" fill="#f6e8b8"/><circle cx="24.4" cy="26.1" r="1.2" fill="#e8d090"/><circle cx="98.7" cy="2.2" r="0.8" fill="#b89048"/><circle cx="19.6" cy="33.0" r="0.8" fill="#a88440"/><circle cx="21.9" cy="28.2" r="1.0" fill="#e8d090"/><circle cx="38.8" cy="42.8" r="0.8" fill="#f2e2a8"/><circle cx="69.5" cy="34.1" r="0.7" fill="#e8d090"/><circle cx="46.1" cy="2.4" r="0.7" fill="#b89048"/><circle cx="82.0" cy="50.3" r="1.2" fill="#f2e2a8"/><circle cx="52.4" cy="20.4" r="0.9" fill="#a88440"/><circle cx="33.6" cy="43.7" r="1.0" fill="#a88440"/><circle cx="52.3" cy="43.8" r="0.8" fill="#a88440"/><circle cx="63.9" cy="35.9" r="1.1" fill="#f6e8b8"/><circle cx="52.5" cy="15.6" r="1.0" fill="#b89048"/><circle cx="19.7" cy="41.0" r="0.9" fill="#b89048"/><circle cx="16.7" cy="42.2" r="1.1" fill="#b89048"/><circle cx="50.8" cy="22.3" r="1.0" fill="#f2e2a8"/><circle cx="29.3" cy="6.2" r="0.9" fill="#f2e2a8"/><circle cx="95.8" cy="25.3" r="0.8" fill="#e8d090"/><circle cx="19.7" cy="7.8" r="0.8" fill="#f6e8b8"/><circle cx="71.9" cy="20.4" r="0.8" fill="#a88440"/><circle cx="46.8" cy="8.9" r="1.3" fill="#e8d090"/><circle cx="25.0" cy="27.0" r="0.9" fill="#e8d090"/><circle cx="91.6" cy="2.4" r="0.9" fill="#f6e8b8"/><circle cx="70.6" cy="35.0" r="1.2" fill="#f2e2a8"/><circle cx="71.8" cy="45.4" r="1.1" fill="#e8d090"/><circle cx="93.4" cy="34.2" r="1.2" fill="#a88440"/><circle cx="90.9" cy="10.1" r="0.7" fill="#e8d090"/><circle cx="100.9" cy="8.6" r="0.8" fill="#b89048"/><circle cx="37.6" cy="39.9" r="0.7" fill="#e8d090"/><circle cx="66.5" cy="41.7" r="1.1" fill="#f2e2a8"/><circle cx="44.7" cy="21.4" r="1.0" fill="#f6e8b8"/><circle cx="72.4" cy="16.8" r="0.9" fill="#f6e8b8"/><circle cx="37.8" cy="21.4" r="1.0" fill="#b89048"/><circle cx="55.1" cy="1.3" r="1.3" fill="#a88440"/><circle cx="73.4" cy="24.3" r="1.2" fill="#2a2030"/><circle cx="82.7" cy="42.9" r="1.2" fill="#2a2030"/><circle cx="96.0" cy="42.5" r="1.2" fill="#2a2030"/><circle cx="69.4" cy="5.4" r="1.2" fill="#2a2030"/><circle cx="66.9" cy="20.3" r="1.2" fill="#2a2030"/><circle cx="93.9" cy="27.2" r="1.2" fill="#2a2030"/><circle cx="85.1" cy="4.0" r="1.2" fill="#2a2030"/><circle cx="52.9" cy="48.1" r="1.2" fill="#2a2030"/><circle cx="64.1" cy="38.0" r="1.2" fill="#2a2030"/><circle cx="49.9" cy="39.6" r="1.2" fill="#2a2030"/><circle cx="99.6" cy="34.6" r="1.2" fill="#2a2030"/><circle cx="92.8" cy="3.3" r="1.2" fill="#2a2030"/><circle cx="49.0" cy="32.7" r="1.2" fill="#2a2030"/><circle cx="87.2" cy="7.5" r="1.2" fill="#2a2030"/><circle cx="53.0" cy="46.3" r="1.2" fill="#2a2030"/><circle cx="62.6" cy="42.5" r="1.2" fill="#2a2030"/><circle cx="93.5" cy="36.3" r="1.2" fill="#2a2030"/><circle cx="89.0" cy="13.1" r="1.2" fill="#2a2030"/><circle cx="95.8" cy="32.5" r="1.2" fill="#2a2030"/><circle cx="60.4" cy="18.2" r="1.2" fill="#2a2030"/><circle cx="82.4" cy="47.3" r="1.2" fill="#2a2030"/><circle cx="72.8" cy="14.7" r="1.2" fill="#2a2030"/><circle cx="103.8" cy="26.0" r="0.8" fill="#d04a30"/><circle cx="81.1" cy="32.8" r="0.8" fill="#d04a30"/><circle cx="59.5" cy="20.6" r="0.8" fill="#d04a30"/><circle cx="57.1" cy="22.2" r="0.8" fill="#d04a30"/><circle cx="83.8" cy="15.9" r="0.8" fill="#d04a30"/><circle cx="65.0" cy="20.8" r="0.8" fill="#d04a30"/><path d="M0 0H22Q12 10 14 23H0Z" fill="#e6dfd0"/><path d="M23 -1Q10 12 15 30" stroke="#22281c" stroke-width="3.2" fill="none"/><path d="M40 58.5Q70 50 106.5 52V58.5Z" fill="#6a4428"/><ellipse cx="28" cy="9" rx="6" ry="3" transform="rotate(-60 28 9)" fill="#8aba52"/><ellipse cx="23" cy="19" rx="5" ry="2.6" transform="rotate(-70 23 19)" fill="#78aa42"/><ellipse cx="40" cy="7" rx="4" ry="6" transform="rotate(0 40 7)" fill="#6aa040"/><ellipse cx="52" cy="15" rx="15" ry="4.2" transform="rotate(-55 52 15)" fill="#5a9a36"/><ellipse cx="53" cy="14" rx="13" ry="1.6" transform="rotate(-55 53 14)" fill="#8cc060"/><ellipse cx="75" cy="11" rx="14" ry="4.6" transform="rotate(-15 75 11)" fill="#b0d070"/><ellipse cx="96" cy="11" rx="4.2" ry="12" transform="rotate(-15 96 11)" fill="#78b048"/><ellipse cx="99" cy="35" rx="8" ry="5.5" transform="rotate(0 99 35)" fill="#a4cc62"/><ellipse cx="78" cy="31" rx="6" ry="3.5" transform="rotate(-40 78 31)" fill="#94c25a"/><ellipse cx="82" cy="50" rx="12" ry="4" transform="rotate(-20 82 50)" fill="#9ccc5c"/><ellipse cx="63" cy="40" rx="5" ry="3" transform="rotate(-30 63 40)" fill="#90c058"/></svg>
 <div class="a" style="left:0;top:0;width:107px;height:19.5px;background:#5b8b2f">
  <div class="a" style="left:5.5px;top:4.4px;width:8px;height:0.7px;background:#c8dcb0"></div>
  <div class="a" style="left:5.2px;top:7.3px;font:7.6px/8px 'Liberation Serif',serif;color:#f6f8f0;letter-spacing:-0.1px">Seasonal Dishes</div>
 </div>
 <div class="a" style="left:0;top:42px;width:44px;height:36px;background:rgba(92,112,42,.88)">
  <div class="a lo" style="left:5.3px;top:3.3px;width:36px;height:27px;font-size:2.75px;line-height:3.05px;color:#eef0e0">Lorem ipsum dolor sit amet, consectetur adipiscing elit. Aenean tempor aliquet fermentum, elit integer ad vestibulum volutpat. Morbi faucibus neque est, vel odio integer sed nulla magna ultricies. Dolor sit amet congue lorem etiam pellentesque habitant morbi tristique senectus et netus malesuada fames ac turpis egestas. Vestibulum tortor quam, feugiat vitae ultricies eget tempor sit amet ante. Donec eu libero sit amet quam egestas semper aenean ultricies mi vitae est. Mauris placerat eleifend leo quisque sit amet est et sapien ullamcorper pharetra vestibulum erat wisi condimentum sed commodo vitae ornare sit amet wisi aenean fermentum elit eget tincidunt condimentum eros ipsum rutrum orci sagittis tempus lacus enim ac dui donec non enim in turpis pulvinar facilisis ut felis praesent dapibus neque id cursus faucibus tortor neque egestas augue eu vulputate magna eros eu erat aliquam erat volutpat nam dui mi tincidunt quis accumsan porttitor facilisis luctus metus.</div>
 </div>
</div>
<div class="th" style="left:267px;top:185.5px;width:106.7px;height:78px;background:#fefefe">
 <div class="a" style="left:5.3px;top:5.8px;width:96.3px;height:11.8px;border:0.6px solid #e2e2e2"></div>
 <div class="a" style="left:5.3px;top:17.4px;width:46.4px;height:55.4px;border:0.6px solid #e2e2e2"></div>
 <div class="a" style="left:55px;top:17.4px;width:46.6px;height:55.4px;border:0.6px solid #e2e2e2"></div>
 <div class="a" style="left:0;top:7.2px;width:107px;text-align:center;font:5.6px/6px 'Liberation Sans',sans-serif;color:#8a8a8a">Blank</div>
</div>
<div class="lb" style="left:12px;top:269.5px">Antique</div>
<div class="lb" style="left:135.5px;top:269.5px">Cookbook</div>
<div class="lb" style="left:259px;top:269.5px">Blank</div>

<!-- portrait row -->
<div class="pt" style="left:33.2px;top:332.5px;width:81px;height:107px;background:#f0ece1">
 <div class="a" style="left:35px;top:5.5px;width:10px;height:0.6px;background:#e8a898"></div>
 <div class="a" style="left:12.3px;top:9.3px;width:55.7px;height:0.5px;background:#d0ccc0"></div>
 <div class="a" style="left:0;top:12.6px;width:81px;text-align:center;font:7.3px/8px 'Liberation Serif',serif;color:#3a3632;letter-spacing:-0.1px">Once Upon a Time</div>
 <div class="a lo" style="left:7.2px;top:31.65px;width:67px;height:23px;font-size:2.05px;line-height:2.2px;color:#38342e">Lorem ipsum dolor sit amet, consectetur adipiscing elit. Aenean tempor aliquet fermentum, elit integer ad vestibulum volutpat. Morbi faucibus neque est, vel odio integer sed nulla magna ultricies. Dolor sit amet congue lorem etiam pellentesque habitant morbi tristique senectus et netus malesuada fames ac turpis egestas. Vestibulum tortor quam, feugiat vitae ultricies eget tempor sit amet ante. Donec eu libero sit amet quam egestas semper aenean ultricies mi vitae est. Mauris placerat eleifend leo quisque sit amet est et sapien ullamcorper pharetra vestibulum erat wisi condimentum sed commodo vitae ornare sit amet wisi aenean fermentum elit eget tincidunt condimentum eros ipsum rutrum orci sagittis tempus lacus enim ac dui donec non enim in turpis pulvinar facilisis ut felis praesent dapibus neque id cursus faucibus tortor neque egestas augue eu vulputate magna eros eu erat aliquam erat volutpat nam dui mi tincidunt quis accumsan porttitor facilisis luctus metus.</div>
 <div class="a lo" style="left:7.2px;top:57.05px;width:67px;height:26px;font-size:2.05px;line-height:2.2px;color:#38342e">Lorem ipsum dolor sit amet, consectetur adipiscing elit. Aenean tempor aliquet fermentum, elit integer ad vestibulum volutpat. Morbi faucibus neque est, vel odio integer sed nulla magna ultricies. Dolor sit amet congue lorem etiam pellentesque habitant morbi tristique senectus et netus malesuada fames ac turpis egestas. Vestibulum tortor quam, feugiat vitae ultricies eget tempor sit amet ante. Donec eu libero sit amet quam egestas semper aenean ultricies mi vitae est. Mauris placerat eleifend leo quisque sit amet est et sapien ullamcorper pharetra vestibulum erat wisi condimentum sed commodo vitae ornare sit amet wisi aenean fermentum elit eget tincidunt condimentum eros ipsum rutrum orci sagittis tempus lacus enim ac dui donec non enim in turpis pulvinar facilisis ut felis praesent dapibus neque id cursus faucibus tortor neque egestas augue eu vulputate magna eros eu erat aliquam erat volutpat nam dui mi tincidunt quis accumsan porttitor facilisis luctus metus.</div>
 <div class="a lo" style="left:7.2px;top:85.85px;width:67px;height:11.2px;font-size:2.05px;line-height:2.2px;color:#38342e">Lorem ipsum dolor sit amet, consectetur adipiscing elit. Aenean tempor aliquet fermentum, elit integer ad vestibulum volutpat. Morbi faucibus neque est, vel odio integer sed nulla magna ultricies. Dolor sit amet congue lorem etiam pellentesque habitant morbi tristique senectus et netus malesuada fames ac turpis egestas. Vestibulum tortor quam, feugiat vitae ultricies eget tempor sit amet ante. Donec eu libero sit amet quam egestas semper aenean ultricies mi vitae est. Mauris placerat eleifend leo quisque sit amet est et sapien ullamcorper pharetra vestibulum erat wisi condimentum sed commodo vitae ornare sit amet wisi aenean fermentum elit eget tincidunt condimentum eros ipsum rutrum orci sagittis tempus lacus enim ac dui donec non enim in turpis pulvinar facilisis ut felis praesent dapibus neque id cursus faucibus tortor neque egestas augue eu vulputate magna eros eu erat aliquam erat volutpat nam dui mi tincidunt quis accumsan porttitor facilisis luctus metus.</div>
 <div class="a" style="left:40px;top:102.5px;width:1px;height:0.7px;background:#999"></div>
</div>
<div class="a" style="left:153.8px;top:329.8px;width:86.4px;height:112.6px;border:2.1px solid #eec62c;border-radius:2.5px;background:#151515"></div>
<div class="pt" style="left:156.8px;top:332.4px;width:80.8px;height:106.8px;background:linear-gradient(#3a74bc 0%,#5a8cc8 20%,#8ab0d4 40%,#a8c0d4 55%,#6a7078 62%,#4a4038 70%,#2e2822 100%);-webkit-box-reflect:below 5px linear-gradient(transparent 70%,rgba(0,0,0,.15))">
 <div class="a" style="left:0;top:34px;width:22px;height:32px;background:#1e2820;clip-path:polygon(0 25%,20% 0,45% 15%,70% 35%,100% 45%,100% 100%,0 100%)"></div>
 <div class="a" style="left:17px;top:24px;width:30px;height:40px;background:linear-gradient(#6a7080,#4a505c)"></div>
 <div class="a" style="left:19px;top:42px;width:26px;height:20px;background:linear-gradient(90deg,#f0c878 0 14%,#2a2a2a 14% 30%,#e8b868 30% 40%,#2a2828 40% 62%,#f0d090 62% 72%,#3a3430 72%)"></div>
 <div class="a" style="left:38px;top:0;width:43px;height:36px;background:#2c323e;clip-path:polygon(0 90%,70% 0,100% 0,100% 20%,16% 100%)"></div>
 <div class="a" style="left:44px;top:2px;width:37px;height:60px;background:repeating-linear-gradient(90deg,rgba(40,44,54,.9) 0 1.4px,transparent 1.4px 9px),repeating-linear-gradient(rgba(40,44,54,.8) 0 1.2px,transparent 1.2px 16px),linear-gradient(#dcd6c4,#e8dcc0 50%,#c8b48a);clip-path:polygon(0 55%,85% 0,100% 0,100% 100%,0 100%)"></div>
 <div class="a" style="left:0;top:64px;width:81px;height:43px;background:repeating-linear-gradient(98deg,#3a3430 0 1.5px,#2a2624 1.5px 3px)"></div>
 <div class="a" style="left:0;top:63px;width:19px;height:44px;background:linear-gradient(#70d0ec,#2a9ccc);clip-path:polygon(0 0,100% 0,35% 100%,0 100%)"></div>
 <div class="a" style="left:35.3px;top:53.8px;width:45.5px;height:44.5px;background:#fdfdfd">
  <div class="a" style="left:3.5px;top:3.5px;width:1px;height:0.8px;background:#999"></div>
  <div class="a" style="left:4px;top:7px;font:4.6px/4.6px 'Liberation Sans',sans-serif;color:#3a3a3a;letter-spacing:-0.2px">SUSTAINABLE<br>DESIGN</div>
  <div class="a lo" style="left:4px;top:17px;width:38px;height:24px;font-size:1.85px;line-height:2.05px;color:#3a3a3a">Lorem ipsum dolor sit amet, consectetur adipiscing elit. Aenean tempor aliquet fermentum, elit integer ad vestibulum volutpat. Morbi faucibus neque est, vel odio integer sed nulla magna ultricies. Dolor sit amet congue lorem etiam pellentesque habitant morbi tristique senectus et netus malesuada fames ac turpis egestas. Vestibulum tortor quam, feugiat vitae ultricies eget tempor sit amet ante. Donec eu libero sit amet quam egestas semper aenean ultricies mi vitae est. Mauris placerat eleifend leo quisque sit amet est et sapien ullamcorper pharetra vestibulum erat wisi condimentum sed commodo vitae ornare sit amet wisi aenean fermentum elit eget tincidunt condimentum eros ipsum rutrum orci sagittis tempus lacus enim ac dui donec non enim in turpis pulvinar facilisis ut felis praesent dapibus neque id cursus faucibus tortor neque egestas augue eu vulputate magna eros eu erat aliquam erat volutpat nam dui mi tincidunt quis accumsan porttitor facilisis luctus metus.</div>
 </div>
</div>
<div class="pt" style="left:279.8px;top:332.5px;width:80.8px;height:107px;background:#fdfdfd">
 <div class="a" style="left:2.6px;top:7.5px;font:9.5px/10px 'Liberation Sans',sans-serif;color:#c4c4c4">1</div>
 <div class="a" style="left:2.4px;top:17.6px;font:bold 4.4px/5px 'Liberation Sans',sans-serif;color:#2a2a2a;letter-spacing:-0.1px">Marine Biology</div>
 <div class="a lo" style="left:53px;top:17.52px;width:25px;height:6px;font-size:1.71px;line-height:1.9px;color:#3a3a3a">Lorem ipsum dolor sit amet, consectetur adipiscing elit. Aenean tempor aliquet fermentum, elit integer ad vestibulum volutpat. Morbi faucibus neque est, vel odio integer sed nulla magna ultricies. Dolor sit amet congue lorem etiam pellentesque habitant morbi tristique senectus et netus malesuada fames ac turpis egestas. Vestibulum tortor quam, feugiat vitae ultricies eget tempor sit amet ante. Donec eu libero sit amet quam egestas semper aenean ultricies mi vitae est. Mauris placerat eleifend leo quisque sit amet est et sapien ullamcorper pharetra vestibulum erat wisi condimentum sed commodo vitae ornare sit amet wisi aenean fermentum elit eget tincidunt condimentum eros ipsum rutrum orci sagittis tempus lacus enim ac dui donec non enim in turpis pulvinar facilisis ut felis praesent dapibus neque id cursus faucibus tortor neque egestas augue eu vulputate magna eros eu erat aliquam erat volutpat nam dui mi tincidunt quis accumsan porttitor facilisis luctus metus.</div>
 <div class="a" style="left:2.5px;top:28.5px;width:76.3px;height:75.3px;overflow:hidden;background:linear-gradient(#b8eae4 0%,#68d4d4 18%,#30c4c8 45%,#34c6c2 75%,#7ad6c6 100%)">
  <div class="a" style="left:30px;top:-5px;width:50px;height:55px;background:radial-gradient(ellipse 50% 50% at 70% 20%,rgba(255,255,245,.75) 0,rgba(230,250,245,.35) 50%,rgba(255,255,255,0) 100%)"></div>
  <div class="a" style="left:0;top:62px;width:76px;height:14px;background:linear-gradient(rgba(150,220,190,0),rgba(160,220,180,.6))"></div>
  <div class="a" style="left:24px;top:20px;width:42px;height:17px;border-radius:50% 55% 45% 50%;background:radial-gradient(ellipse at 50% 35%,#b0b090,#7a8060 55%,#4e5a44);transform:rotate(-6deg)"></div>
  <div class="a" style="left:60px;top:20px;width:10px;height:6px;border-radius:50%;background:#5e6e58;transform:rotate(20deg)"></div>
  <div class="a" style="left:8px;top:34px;width:14px;height:10px;border-radius:50% 40% 40% 50%;background:radial-gradient(ellipse at 40% 40%,#c0c0a0,#6a7458)"></div>
  <div class="a" style="left:18px;top:30px;width:14px;height:8px;border-radius:50%;background:#8a9270"></div>
  <div class="a" style="left:32px;top:40px;width:27px;height:10px;border-radius:40% 60% 60% 40%;background:linear-gradient(#4e5a40,#3a4a34);transform:rotate(32deg)"></div>
  <div class="a" style="left:18px;top:20px;width:12px;height:6px;border-radius:50%;background:#5a6a50;transform:rotate(-40deg)"></div>
 </div>
</div>
<div class="pt" style="left:403.2px;top:332.5px;width:81.4px;height:107px;background:#f6f0d9">
 <div class="a" style="left:4.5px;top:4.6px;width:72px;height:0.6px;background:#d8d0b8"></div>
 <div class="a" style="left:4.7px;top:9.9px;width:72.6px;height:28.9px;overflow:hidden">
  <div class="a" style="left:4px;top:4px;width:8px;height:7px;border-radius:50%;background:#6ab4cc"></div>
  <div class="a" style="left:8px;top:0px;width:14px;height:8px;border-radius:50%;background:#70b8d0"></div>
  <div class="a" style="left:62px;top:3px;width:9px;height:8px;border-radius:50%;background:#6ab4cc"></div>
  <div class="a" style="left:40px;top:1px;width:7px;height:6px;border-radius:50%;background:#f0a830"></div>
  <div class="a" style="left:6px;top:6px;width:18px;height:22px;background:#e8a030;clip-path:polygon(0 30%,50% 0,100% 30%,100% 100%,0 100%)"></div>
  <div class="a" style="left:16px;top:5px;width:20px;height:16px;background:#4a3a2a;clip-path:polygon(0 100%,20% 0,80% 0,100% 100%)"></div>
  <div class="a" style="left:30px;top:2px;width:14px;height:22px;background:#e8a838;clip-path:polygon(50% 0,100% 40%,100% 100%,0 100%,0 40%)"></div>
  <div class="a" style="left:22px;top:14px;width:22px;height:15px;background:#3a7c90;clip-path:polygon(20% 0,80% 0,100% 35%,100% 100%,0 100%,0 35%)"></div>
  <div class="a" style="left:24px;top:14px;width:18px;height:5px;background:#2a3438"></div>
  <div class="a" style="left:46px;top:4px;width:16px;height:25px;background:#b0b430;clip-path:polygon(0 20%,25% 0,75% 0,100% 20%,100% 100%,0 100%)"></div>
  <div class="a" style="left:58px;top:14px;width:14px;height:15px;background:#a8b030"></div>
  <div class="a" style="left:0;top:18px;width:22px;height:11px;background:#a8ac30;clip-path:polygon(0 40%,40% 0,100% 30%,100% 100%,0 100%)"></div>
  <div class="a" style="left:0;top:26.5px;width:73px;height:2.4px;background:#a0a428"></div>
  <div class="a" style="left:10px;top:13px;width:2px;height:3px;background:#3a3028"></div>
  <div class="a" style="left:14px;top:13px;width:2px;height:3px;background:#3a3028"></div>
  <div class="a" style="left:34px;top:12px;width:2px;height:3.5px;background:#3a3028"></div>
  <div class="a" style="left:38px;top:12px;width:2px;height:3.5px;background:#3a3028"></div>
  <div class="a" style="left:49px;top:9px;width:2.4px;height:3.5px;background:#3a3a20"></div>
  <div class="a" style="left:54px;top:9px;width:2.4px;height:3.5px;background:#3a3a20"></div>
  <div class="a" style="left:49px;top:16px;width:2.4px;height:3.5px;background:#3a3a20"></div>
  <div class="a" style="left:54px;top:16px;width:2.4px;height:3.5px;background:#3a3a20"></div>
  <div class="a" style="left:61px;top:17px;width:2.4px;height:3px;background:#3a3a20"></div>
  <div class="a" style="left:66px;top:17px;width:2.4px;height:3px;background:#3a3a20"></div>
  <div class="a" style="left:46px;top:3px;width:16px;height:2.5px;background:#3a3a28"></div>
  <div class="a" style="left:5px;top:22px;width:4px;height:3px;background:#3a3028"></div>
  <div class="a" style="left:66px;top:8px;width:1.5px;height:7px;background:#3a3028"></div>
 </div>
 <div class="a" style="left:4px;top:42.5px;font:12px/13px 'Liberation Sans',sans-serif;color:#8ad0da">1</div>
 <div class="a" style="left:4.6px;top:56px;font:4.3px/4.8px 'Liberation Serif',serif;color:#3a3a3a">Our Humble<br>Beginnings</div>
 <div class="a lo" style="left:28.8px;top:44.08px;width:46.5px;height:21px;font-size:1.89px;line-height:2.1px;color:#5a564c">Lorem ipsum dolor sit amet, consectetur adipiscing elit. Aenean tempor aliquet fermentum, elit integer ad vestibulum volutpat. Morbi faucibus neque est, vel odio integer sed nulla magna ultricies. Dolor sit amet congue lorem etiam pellentesque habitant morbi tristique senectus et netus malesuada fames ac turpis egestas. Vestibulum tortor quam, feugiat vitae ultricies eget tempor sit amet ante. Donec eu libero sit amet quam egestas semper aenean ultricies mi vitae est. Mauris placerat eleifend leo quisque sit amet est et sapien ullamcorper pharetra vestibulum erat wisi condimentum sed commodo vitae ornare sit amet wisi aenean fermentum elit eget tincidunt condimentum eros ipsum rutrum orci sagittis tempus lacus enim ac dui donec non enim in turpis pulvinar facilisis ut felis praesent dapibus neque id cursus faucibus tortor neque egestas augue eu vulputate magna eros eu erat aliquam erat volutpat nam dui mi tincidunt quis accumsan porttitor facilisis luctus metus.</div>
 <div class="a lo" style="left:28.8px;top:67.47px;width:46.5px;height:16.5px;font-size:1.89px;line-height:2.1px;color:#5a564c">Lorem ipsum dolor sit amet, consectetur adipiscing elit. Aenean tempor aliquet fermentum, elit integer ad vestibulum volutpat. Morbi faucibus neque est, vel odio integer sed nulla magna ultricies. Dolor sit amet congue lorem etiam pellentesque habitant morbi tristique senectus et netus malesuada fames ac turpis egestas. Vestibulum tortor quam, feugiat vitae ultricies eget tempor sit amet ante. Donec eu libero sit amet quam egestas semper aenean ultricies mi vitae est. Mauris placerat eleifend leo quisque sit amet est et sapien ullamcorper pharetra vestibulum erat wisi condimentum sed commodo vitae ornare sit amet wisi aenean fermentum elit eget tincidunt condimentum eros ipsum rutrum orci sagittis tempus lacus enim ac dui donec non enim in turpis pulvinar facilisis ut felis praesent dapibus neque id cursus faucibus tortor neque egestas augue eu vulputate magna eros eu erat aliquam erat volutpat nam dui mi tincidunt quis accumsan porttitor facilisis luctus metus.</div>
 <div class="a lo" style="left:28.8px;top:86.97px;width:46.5px;height:12.5px;font-size:1.89px;line-height:2.1px;color:#5a564c">Lorem ipsum dolor sit amet, consectetur adipiscing elit. Aenean tempor aliquet fermentum, elit integer ad vestibulum volutpat. Morbi faucibus neque est, vel odio integer sed nulla magna ultricies. Dolor sit amet congue lorem etiam pellentesque habitant morbi tristique senectus et netus malesuada fames ac turpis egestas. Vestibulum tortor quam, feugiat vitae ultricies eget tempor sit amet ante. Donec eu libero sit amet quam egestas semper aenean ultricies mi vitae est. Mauris placerat eleifend leo quisque sit amet est et sapien ullamcorper pharetra vestibulum erat wisi condimentum sed commodo vitae ornare sit amet wisi aenean fermentum elit eget tincidunt condimentum eros ipsum rutrum orci sagittis tempus lacus enim ac dui donec non enim in turpis pulvinar facilisis ut felis praesent dapibus neque id cursus faucibus tortor neque egestas augue eu vulputate magna eros eu erat aliquam erat volutpat nam dui mi tincidunt quis accumsan porttitor facilisis luctus metus.</div>
</div>
<div class="pt" style="left:526.2px;top:332.5px;width:81.4px;height:107px;background:#fdfdfd">
  <div class="a" style="left:0;top:0;width:81.4px;height:55.3px;overflow:hidden;background:linear-gradient(90deg,#2a2824,#1c1814 55%,#100c0a)">
  <div class="a" style="left:0;top:0;width:46px;height:30px;background:linear-gradient(165deg,#50504a,#34342e 60%,#24241e);border-radius:0 0 50% 0"></div>
  <div class="a" style="left:52px;top:0;width:30px;height:40px;background:linear-gradient(#2a2a26,#1a1814)"></div>
  <div class="a" style="left:38px;top:24px;width:50px;height:5.5px;background:linear-gradient(#9a6a40,#6a4020);transform:rotate(-33deg);transform-origin:0 50%"></div>
  <div class="a" style="left:2px;top:11px;width:50px;height:38px;border-radius:50% 45% 50% 45%;background:radial-gradient(ellipse at 45% 40%,#d8823c 0,#c06a2c 35%,#9a4c1c 70%,#6a3010 100%);transform:rotate(-18deg)"></div>
  <div class="a" style="left:24px;top:22px;width:8px;height:12px;background:#141010;transform:rotate(-20deg)"></div>
  <div class="a" style="left:58px;top:8px;width:14px;height:20px;border-radius:45%;background:linear-gradient(160deg,#c89880,#8a5a48)"></div>
  <div class="a" style="left:62px;top:26px;width:18px;height:12px;background:#3a3a34;border-radius:30%"></div>
  <div class="a" style="left:4px;top:37px;width:22px;height:18px;border-radius:40%;background:linear-gradient(150deg,#9a7060,#5a3a30)"></div>
 </div>
 <div class="a" style="left:12px;top:63.3px;width:57px;height:0.5px;background:#e6e0d8"></div>
 <div class="a" style="left:40px;top:62.7px;width:1.2px;height:1.2px;background:#d04030"></div>
 <div class="a" style="left:0;top:68.8px;width:81.4px;text-align:center;font:5.7px/6px 'Liberation Serif',serif;color:#3a3a3a;letter-spacing:-0.1px">LIFE ON THE ROAD</div>
 <div class="a lo" style="left:6px;top:79.09px;width:70px;height:18px;font-size:1.84px;line-height:2.05px;color:#3a3a3a">Lorem ipsum dolor sit amet, consectetur adipiscing elit. Aenean tempor aliquet fermentum, elit integer ad vestibulum volutpat. Morbi faucibus neque est, vel odio integer sed nulla magna ultricies. Dolor sit amet congue lorem etiam pellentesque habitant morbi tristique senectus et netus malesuada fames ac turpis egestas. Vestibulum tortor quam, feugiat vitae ultricies eget tempor sit amet ante. Donec eu libero sit amet quam egestas semper aenean ultricies mi vitae est. Mauris placerat eleifend leo quisque sit amet est et sapien ullamcorper pharetra vestibulum erat wisi condimentum sed commodo vitae ornare sit amet wisi aenean fermentum elit eget tincidunt condimentum eros ipsum rutrum orci sagittis tempus lacus enim ac dui donec non enim in turpis pulvinar facilisis ut felis praesent dapibus neque id cursus faucibus tortor neque egestas augue eu vulputate magna eros eu erat aliquam erat volutpat nam dui mi tincidunt quis accumsan porttitor facilisis luctus metus.</div>
</div>
<div class="pt" style="left:650.2px;top:332.5px;width:81.4px;height:107px;background:#2e2e2e;border:0.8px solid #4e4e4e">
 <div class="a" style="left:3.5px;top:4.2px;width:73px;height:0.7px;background:#c0c0c0"></div>
 <div class="a" style="left:3.5px;top:6px;width:6px;height:0.5px;background:#888"></div>
 <div class="a" style="left:3.3px;top:9.5px;font:6.3px/7px 'Liberation Serif',serif;color:#ececec;letter-spacing:-0.1px">A Perfect Evening in Paris</div>
 <div class="a" style="left:3.5px;top:18.5px;width:73px;height:0.5px;background:#444"></div>
  <div class="a" style="left:3.3px;top:25.7px;width:73.2px;height:37px;overflow:hidden;background:linear-gradient(90deg,#6a4048 0%,#b87858 16%,#e8a868 40%,#f8d488 62%,#fff0b8 76%,#f0a850 88%,#9a5840 100%)">
  <div class="a" style="left:0;top:0;width:73px;height:12px;background:linear-gradient(rgba(250,230,170,.5),rgba(250,230,170,0))"></div>
  <div class="a" style="left:19px;top:3px;width:32px;height:34px;background:linear-gradient(#c08a64,#9a6a4c);clip-path:polygon(0 0,100% 0,100% 100%,75% 100%,75% 55%,25% 55%,25% 100%,0 100%)"></div>
  <div class="a" style="left:29.5px;top:10.5px;width:11px;height:27px;border-radius:5.5px 5.5px 0 0;background:#fbe8b0"></div>
  <div class="a" style="left:44px;top:6px;width:30px;height:30px;border-radius:50%;background:radial-gradient(#fffff4 0,#fff4c0 22%,rgba(255,220,120,.7) 48%,rgba(255,190,90,0) 72%)"></div>
  <div class="a" style="left:0;top:0;width:12px;height:37px;background:linear-gradient(90deg,#5a3a48,rgba(120,80,70,.2))"></div>
  <div class="a" style="left:62px;top:4px;width:11px;height:33px;background:linear-gradient(90deg,rgba(120,70,50,.2),#5a3430)"></div>
  <div class="a" style="left:0;top:30px;width:73px;height:7px;background:linear-gradient(rgba(70,40,40,0),rgba(70,40,40,.55))"></div>
 </div>
 <div class="a lo" style="left:3.5px;top:65.88px;width:73px;height:10px;font-size:1.89px;line-height:2.1px;color:#f0f0f0">Lorem ipsum dolor sit amet, consectetur adipiscing elit. Aenean tempor aliquet fermentum, elit integer ad vestibulum volutpat. Morbi faucibus neque est, vel odio integer sed nulla magna ultricies. Dolor sit amet congue lorem etiam pellentesque habitant morbi tristique senectus et netus malesuada fames ac turpis egestas. Vestibulum tortor quam, feugiat vitae ultricies eget tempor sit amet ante. Donec eu libero sit amet quam egestas semper aenean ultricies mi vitae est. Mauris placerat eleifend leo quisque sit amet est et sapien ullamcorper pharetra vestibulum erat wisi condimentum sed commodo vitae ornare sit amet wisi aenean fermentum elit eget tincidunt condimentum eros ipsum rutrum orci sagittis tempus lacus enim ac dui donec non enim in turpis pulvinar facilisis ut felis praesent dapibus neque id cursus faucibus tortor neque egestas augue eu vulputate magna eros eu erat aliquam erat volutpat nam dui mi tincidunt quis accumsan porttitor facilisis luctus metus.</div>
 <div class="a lo" style="left:3.5px;top:78.88px;width:34px;height:18.5px;font-size:1.89px;line-height:2.1px;color:#f0f0f0">Lorem ipsum dolor sit amet, consectetur adipiscing elit. Aenean tempor aliquet fermentum, elit integer ad vestibulum volutpat. Morbi faucibus neque est, vel odio integer sed nulla magna ultricies. Dolor sit amet congue lorem etiam pellentesque habitant morbi tristique senectus et netus malesuada fames ac turpis egestas. Vestibulum tortor quam, feugiat vitae ultricies eget tempor sit amet ante. Donec eu libero sit amet quam egestas semper aenean ultricies mi vitae est. Mauris placerat eleifend leo quisque sit amet est et sapien ullamcorper pharetra vestibulum erat wisi condimentum sed commodo vitae ornare sit amet wisi aenean fermentum elit eget tincidunt condimentum eros ipsum rutrum orci sagittis tempus lacus enim ac dui donec non enim in turpis pulvinar facilisis ut felis praesent dapibus neque id cursus faucibus tortor neque egestas augue eu vulputate magna eros eu erat aliquam erat volutpat nam dui mi tincidunt quis accumsan porttitor facilisis luctus metus.</div>
 <div class="a lo" style="left:42.5px;top:78.88px;width:34px;height:18.5px;font-size:1.89px;line-height:2.1px;color:#f0f0f0">Lorem ipsum dolor sit amet, consectetur adipiscing elit. Aenean tempor aliquet fermentum, elit integer ad vestibulum volutpat. Morbi faucibus neque est, vel odio integer sed nulla magna ultricies. Dolor sit amet congue lorem etiam pellentesque habitant morbi tristique senectus et netus malesuada fames ac turpis egestas. Vestibulum tortor quam, feugiat vitae ultricies eget tempor sit amet ante. Donec eu libero sit amet quam egestas semper aenean ultricies mi vitae est. Mauris placerat eleifend leo quisque sit amet est et sapien ullamcorper pharetra vestibulum erat wisi condimentum sed commodo vitae ornare sit amet wisi aenean fermentum elit eget tincidunt condimentum eros ipsum rutrum orci sagittis tempus lacus enim ac dui donec non enim in turpis pulvinar facilisis ut felis praesent dapibus neque id cursus faucibus tortor neque egestas augue eu vulputate magna eros eu erat aliquam erat volutpat nam dui mi tincidunt quis accumsan porttitor facilisis luctus metus.</div>
</div>
<div class="pt" style="left:773.8px;top:332.5px;width:80.8px;height:106.5px;background:#fefefe">
 <div class="a" style="left:6.6px;top:5.4px;width:68px;height:95px;border:0.6px solid #e2e2e2"></div>
 <div class="a" style="left:6.6px;top:22.3px;width:68px;height:0.6px;background:#e2e2e2"></div>
 <div class="a" style="left:0;top:7.3px;width:81px;text-align:center;font:5.6px/6px 'Liberation Sans',sans-serif;color:#8a8a8a">Blank</div>
</div>
<div class="lb" style="left:12.5px;top:444.6px">Classic Text</div>
<div class="lb" style="left:136px;top:444.6px">Photo Book</div>
<div class="lb" style="left:259.5px;top:444.6px">Modern Basic</div>
<div class="lb" style="left:383px;top:444.6px">Gazette</div>
<div class="lb" style="left:506.5px;top:444.6px">Biography</div>
<div class="lb" style="left:630px;top:444.6px">Charcoal</div>
<div class="lb" style="left:753.5px;top:444.6px">Blank</div>

<!-- bottom bar -->
<div class="btn" style="left:15.6px;width:79px;text-align:left;padding-left:11px">Open Recent</div>
<svg class="a" style="left:85.5px;top:537px" width="7" height="5" viewBox="0 0 7 5"><path d="M1 1.2L3.5 3.7 6 1.2" fill="none" stroke="#3a3a3a" stroke-width="1"/></svg>
<svg class="a" style="left:441.5px;top:537.3px" width="7" height="5" viewBox="0 0 7 5"><rect x="0.3" y="0.3" width="6.4" height="4.4" rx="0.6" fill="#6a6a6a"/><rect x="1.2" y="1.1" width="1.9" height="2.8" rx="0.5" fill="#f4f4f4"/><rect x="3.9" y="1.1" width="1.9" height="2.8" rx="0.5" fill="#f4f4f4"/></svg>
<div class="a" style="left:452.8px;top:538.3px;width:63.4px;height:4.2px;border-radius:2.1px;background:linear-gradient(#6a6a6a,#8a8a8a);box-shadow:0 0.5px 0 rgba(255,255,255,.6)"></div>
<div class="a" style="left:485.9px;top:536.3px;width:7.6px;height:7.6px;border-radius:50%;background:radial-gradient(circle at 50% 50%,#b8b8b8 0 1.2px,#e8e8e8 2px,#f4f4f4 100%);border:0.6px solid #a0a0a0"></div>
<svg class="a" style="left:520.5px;top:535.4px" width="11.5" height="9" viewBox="0 0 11.5 9"><rect x="0.4" y="0.4" width="10.6" height="8" rx="0.7" fill="#5a5a5a"/><rect x="1.4" y="1.4" width="8.6" height="6" fill="#f6f6f6"/><circle cx="5.7" cy="3.3" r="1.25" fill="#111"/><path d="M3.2 7.4Q3.4 4.8 5.7 4.6 8 4.8 8.2 7.4Z" fill="#111"/></svg>
<div class="btn" style="left:99.9px;width:103.8px">Open an Existing File...</div>
<div class="btn" style="left:769.8px;width:48.4px">Cancel</div>
<div class="btn" style="left:823.4px;width:48.7px">Choose</div>
</body></html>
